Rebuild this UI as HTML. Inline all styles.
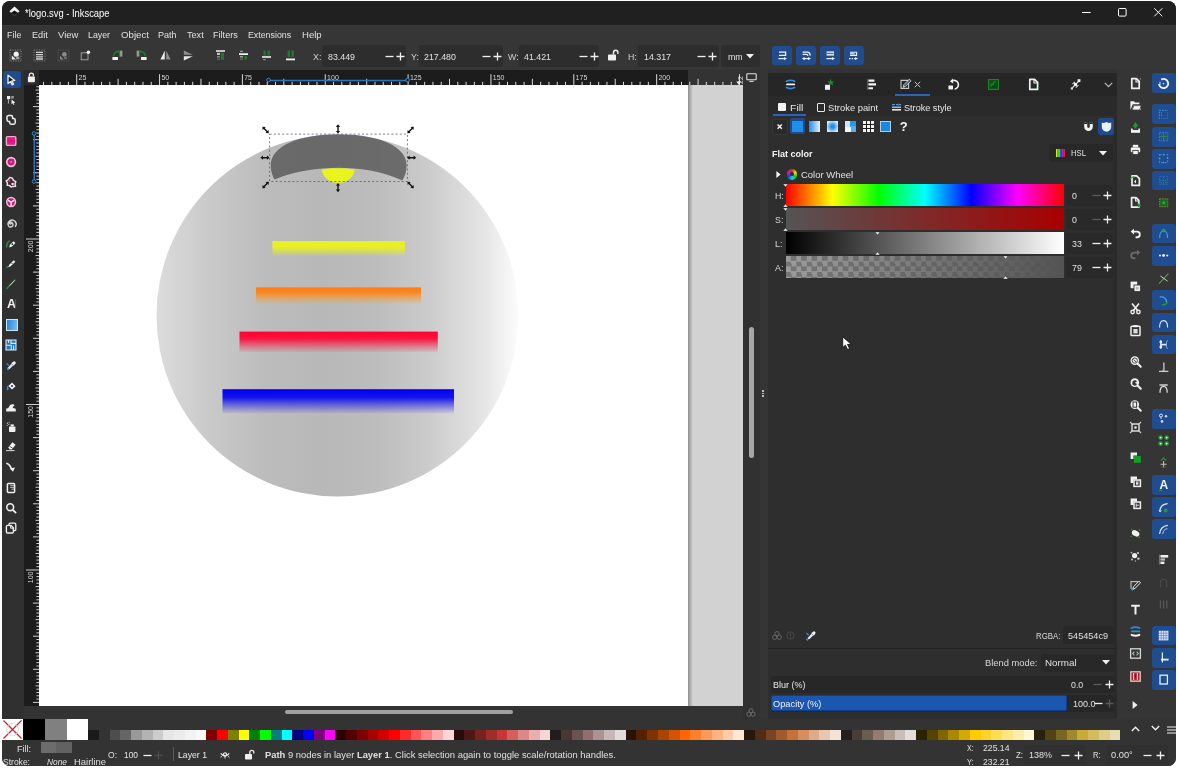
<!DOCTYPE html><html><head><meta charset="utf-8"><title>*logo.svg - Inkscape</title><style>
html,body{margin:0;padding:0;}
body{width:1178px;height:768px;overflow:hidden;background:#fff;font-family:"Liberation Sans",sans-serif;position:relative;}
#win{will-change:transform;position:absolute;left:2px;top:1px;width:1174px;height:764.6px;background:#333333;border-radius:8px;overflow:hidden;}
.abs{position:absolute;}
.t{position:absolute;white-space:nowrap;color:#e4e4e4;font-size:11px;line-height:14px;transform-origin:0 50%;}
.b{font-weight:bold;}
.i{font-style:italic;}
.blue{position:absolute;background:#224c8e;border-radius:3px;}
.box{position:absolute;background:#2d2d2d;border-radius:3px;}
svg{position:absolute;overflow:visible;}
</style></head><body><div id="win">
<div class="abs" style="left:0.00px;top:0.00px;width:1174.00px;height:24.50px;background:#202020;"></div>
<div class="t " style="left:23.00px;top:5.10px;font-size:10.5px;color:#ffffff;transform:scaleX(0.894)">*logo.svg - Inkscape</div>
<svg style="left:6.50px;top:5.00px" width="11" height="10" viewBox="0 0 11 10"><path d="M5.5 0.4L10.6 5.2L9 6.8L5.5 4.4L2 6.8L0.4 5.2Z" fill="#f2f2f2"/><path d="M2.4 7.4L5.5 5.2L8.6 7.4L5.5 9.6Z" fill="#0c0c0c"/><path d="M3 7.6L5.5 9.4L8 7.6" fill="none" stroke="#5a5a5a" stroke-width="0.8"/></svg>
<svg style="left:1079.90px;top:6.70px" width="8.6" height="8.6" viewBox="0 0 8.6 8.6"><path d="M0 4.5H8.6" stroke="#fff" stroke-width="1"/></svg>
<svg style="left:1115.50px;top:6.70px" width="8.6" height="8.6" viewBox="0 0 8.6 8.6"><rect x="0.5" y="0.5" width="7.6" height="7.6" rx="1" fill="none" stroke="#fff" stroke-width="1"/></svg>
<svg style="left:1151.90px;top:6.70px" width="8.6" height="8.6" viewBox="0 0 8.6 8.6"><path d="M0.3 0.3L8.3 8.3M8.3 0.3L0.3 8.3" stroke="#fff" stroke-width="1"/></svg>
<div class="abs" style="left:0.00px;top:23.50px;width:1174.00px;height:1.60px;background:#3a3a3a;"></div>
<div class="abs" style="left:0.00px;top:25.00px;width:1174.00px;height:43.50px;background:#363636;"></div>
<div class="t " style="left:4.80px;top:26.90px;font-size:9.6px;color:#e0e0e0;transform:scaleX(0.931)">File</div>
<div class="t " style="left:29.70px;top:26.90px;font-size:9.6px;color:#e0e0e0;transform:scaleX(0.955)">Edit</div>
<div class="t " style="left:55.70px;top:26.90px;font-size:9.6px;color:#e0e0e0;transform:scaleX(0.984)">View</div>
<div class="t " style="left:86.30px;top:26.90px;font-size:9.6px;color:#e0e0e0;transform:scaleX(0.917)">Layer</div>
<div class="t " style="left:118.50px;top:26.90px;font-size:9.6px;color:#e0e0e0;transform:scaleX(1.010)">Object</div>
<div class="t " style="left:156.00px;top:26.90px;font-size:9.6px;color:#e0e0e0;transform:scaleX(0.942)">Path</div>
<div class="t " style="left:184.70px;top:26.90px;font-size:9.6px;color:#e0e0e0;transform:scaleX(0.948)">Text</div>
<div class="t " style="left:211.20px;top:26.90px;font-size:9.6px;color:#e0e0e0;transform:scaleX(0.949)">Filters</div>
<div class="t " style="left:246.20px;top:26.90px;font-size:9.6px;color:#e0e0e0;transform:scaleX(0.918)">Extensions</div>
<div class="t " style="left:300.20px;top:26.90px;font-size:9.6px;color:#e0e0e0;transform:scaleX(0.998)">Help</div>
<div class="t " style="left:311.40px;top:48.80px;font-size:9.6px;color:#d0d0d0;transform:scaleX(0.920)">X:</div>
<div class="box" style="left:319.80px;top:43.60px;width:84.00px;height:22.20px;background:#2d2d2d"></div>
<div class="t " style="left:325.70px;top:48.80px;font-size:9.6px;color:#e0e0e0;transform:scaleX(0.920)">83.449</div>
<svg style="left:382.80px;top:50.90px" width="9" height="9" viewBox="0 0 9 9"><path d="M0.5 4.5H8.5" stroke="#f0f0f0" stroke-width="1.3"/></svg>
<svg style="left:393.80px;top:50.90px" width="9" height="9" viewBox="0 0 9 9"><path d="M0.5 4.5H8.5M4.5 0.5V8.5" stroke="#f0f0f0" stroke-width="1.3"/></svg>
<div class="t " style="left:409.00px;top:48.80px;font-size:9.6px;color:#d0d0d0;transform:scaleX(0.920)">Y:</div>
<div class="box" style="left:416.50px;top:43.60px;width:84.00px;height:22.20px;background:#2d2d2d"></div>
<div class="t " style="left:422.40px;top:48.80px;font-size:9.6px;color:#e0e0e0;transform:scaleX(0.920)">217.480</div>
<svg style="left:479.50px;top:50.90px" width="9" height="9" viewBox="0 0 9 9"><path d="M0.5 4.5H8.5" stroke="#f0f0f0" stroke-width="1.3"/></svg>
<svg style="left:490.50px;top:50.90px" width="9" height="9" viewBox="0 0 9 9"><path d="M0.5 4.5H8.5M4.5 0.5V8.5" stroke="#f0f0f0" stroke-width="1.3"/></svg>
<div class="t " style="left:505.60px;top:48.80px;font-size:9.6px;color:#d0d0d0;transform:scaleX(0.920)">W:</div>
<div class="box" style="left:517.00px;top:43.60px;width:80.00px;height:22.20px;background:#2d2d2d"></div>
<div class="t " style="left:522.00px;top:48.80px;font-size:9.6px;color:#e0e0e0;transform:scaleX(0.920)">41.421</div>
<svg style="left:576.50px;top:50.90px" width="9" height="9" viewBox="0 0 9 9"><path d="M0.5 4.5H8.5" stroke="#f0f0f0" stroke-width="1.3"/></svg>
<svg style="left:587.50px;top:50.90px" width="9" height="9" viewBox="0 0 9 9"><path d="M0.5 4.5H8.5M4.5 0.5V8.5" stroke="#f0f0f0" stroke-width="1.3"/></svg>
<div class="t " style="left:626.40px;top:48.80px;font-size:9.6px;color:#d0d0d0;transform:scaleX(0.920)">H:</div>
<div class="box" style="left:636.00px;top:43.60px;width:80.70px;height:22.20px;background:#2d2d2d"></div>
<div class="t " style="left:641.60px;top:48.80px;font-size:9.6px;color:#e0e0e0;transform:scaleX(0.920)">14.317</div>
<svg style="left:694.50px;top:50.90px" width="9" height="9" viewBox="0 0 9 9"><path d="M0.5 4.5H8.5" stroke="#f0f0f0" stroke-width="1.3"/></svg>
<svg style="left:705.50px;top:50.90px" width="9" height="9" viewBox="0 0 9 9"><path d="M0.5 4.5H8.5M4.5 0.5V8.5" stroke="#f0f0f0" stroke-width="1.3"/></svg>
<div class="box" style="left:718.60px;top:43.60px;width:39.40px;height:22.20px;background:#2d2d2d"></div>
<div class="t " style="left:725.60px;top:48.80px;font-size:9.6px;color:#e0e0e0;transform:scaleX(0.920)">mm</div>
<svg style="left:744.00px;top:53.00px" width="8" height="5" viewBox="0 0 8 5"><path d="M0 0H8L4 4.5Z" fill="#f0f0f0"/></svg>
<svg style="left:605.00px;top:48.00px" width="12" height="12" viewBox="0 0 12 12"><rect x="1" y="5.5" width="8" height="6" rx="0.8" fill="#f0f0f0"/><path d="M6.5 5.5V3.5a2.2 2.2 0 0 1 4.4 0V5" fill="none" stroke="#f0f0f0" stroke-width="1.4"/></svg>
<div class="blue" style="left:770.30px;top:45.10px;width:20.10px;height:18.50px;background:#224c8e"></div>
<svg style="left:774.80px;top:49.10px" width="11" height="11" viewBox="0 0 11 11"><path d="M2 2.2H8.6V5.4H2" fill="none" stroke="#eef3ff" stroke-width="1.3"/><path d="M1.4 8.6H8" stroke="#eef3ff" stroke-width="1.2"/><path d="M7.2 6.9L9.9 8.6L7.2 10.3Z" fill="#eef3ff"/></svg>
<div class="blue" style="left:794.00px;top:45.10px;width:20.10px;height:18.50px;background:#224c8e"></div>
<svg style="left:798.50px;top:49.10px" width="11" height="11" viewBox="0 0 11 11"><path d="M1.6 2.2H6.4C8.4 2.2 9.2 3.6 9.2 5.4" fill="none" stroke="#eef3ff" stroke-width="1.3"/><path d="M1.6 4.4H5C6.4 4.4 7 5 7 6" fill="none" stroke="#eef3ff" stroke-width="1.1"/><path d="M3 8.6H8" stroke="#eef3ff" stroke-width="1.2"/><path d="M3.6 6.9L0.9 8.6L3.6 10.3ZM7.2 6.9L9.9 8.6L7.2 10.3Z" fill="#eef3ff"/></svg>
<div class="blue" style="left:818.00px;top:45.10px;width:20.10px;height:18.50px;background:#224c8e"></div>
<svg style="left:822.50px;top:49.10px" width="11" height="11" viewBox="0 0 11 11"><path d="M1.6 1.4H9V5.6H1.6Z" fill="#dfe8fb"/><path d="M2 3.4H8.6" stroke="#224c8e" stroke-width="0.9"/><path d="M1.4 8.6H8" stroke="#eef3ff" stroke-width="1.2"/><path d="M7.2 6.9L9.9 8.6L7.2 10.3Z" fill="#eef3ff"/></svg>
<div class="blue" style="left:841.60px;top:45.10px;width:20.10px;height:18.50px;background:#224c8e"></div>
<svg style="left:846.10px;top:49.10px" width="11" height="11" viewBox="0 0 11 11"><path d="M2 2.2H8.6V5.4H2M2 3.8H6.6" fill="none" stroke="#eef3ff" stroke-width="1.1"/><path d="M1 8.6H8" stroke="#eef3ff" stroke-width="1.3" stroke-dasharray="1.6 1"/><path d="M7.2 6.9L9.9 8.6L7.2 10.3Z" fill="#eef3ff"/></svg>
<svg style="left:7.40px;top:48.40px" width="13" height="13" viewBox="0 0 13 13"><rect x="1" y="1" width="11" height="11" fill="none" stroke="#8c8c8c" stroke-width="0.9" stroke-dasharray="1.2 1.2"/><circle cx="7.2" cy="5.2" r="2.6" fill="#f2f2f2"/><path d="M2.8 6.4L7 10.4H2.8Z" fill="#f2f2f2"/><rect x="7" y="7.6" width="3.4" height="2.8" fill="#9a9a9a"/></svg>
<svg style="left:30.50px;top:48.40px" width="13" height="13" viewBox="0 0 13 13"><rect x="1" y="1" width="11" height="11" fill="none" stroke="#808080" stroke-width="0.9" stroke-dasharray="1.2 1.2"/><path d="M3 3.4H10M3 5.6H10M3 7.8H10M3 10H10" stroke="#d4d4d4" stroke-width="1.3"/></svg>
<svg style="left:55.10px;top:48.40px" width="13" height="13" viewBox="0 0 13 13"><rect x="1" y="1" width="11" height="11" fill="none" stroke="#5c5c5c" stroke-width="0.9" stroke-dasharray="1.2 1.2"/><circle cx="7.4" cy="5.4" r="2.4" fill="#8a8a8a"/><path d="M3 6.8L6.6 10.4H3Z" fill="#8a8a8a"/><rect x="7" y="7.8" width="3" height="2.4" fill="#6a6a6a"/></svg>
<svg style="left:77.10px;top:48.40px" width="13" height="13" viewBox="0 0 13 13"><rect x="2.2" y="3.8" width="6.8" height="7" fill="none" stroke="#a8a8a8" stroke-width="0.9"/><circle cx="9.4" cy="3.2" r="1.7" fill="#f4f4f4"/></svg>
<svg style="left:109.40px;top:48.40px" width="13" height="13" viewBox="0 0 13 13"><rect x="1.4" y="8" width="5.6" height="3" fill="#f2f2f2"/><rect x="8.6" y="1.6" width="2.8" height="6" fill="#8f9a8f"/><path d="M2 7.2C2 4 4 2 7 1.8V0.6L9 2.6L7 4.4V3.2C4.6 3.4 3.6 5 3.4 7.2Z" fill="#1f7a2e"/></svg>
<svg style="left:132.50px;top:48.40px" width="13" height="13" viewBox="0 0 13 13"><rect x="6" y="8" width="5.6" height="3" fill="#f2f2f2"/><rect x="1.6" y="1.6" width="2.8" height="6" fill="#8f9a8f"/><path d="M11 7.2C11 4 9 2 6 1.8V0.6L4 2.6L6 4.4V3.2C8.4 3.4 9.4 5 9.6 7.2Z" fill="#1f7a2e"/></svg>
<svg style="left:156.70px;top:48.40px" width="13" height="13" viewBox="0 0 13 13"><path d="M5.8 1.6V10.6H1.4Z" fill="#e8e8e8"/><path d="M7.2 1.6V10.6H11.6Z" fill="#8e8e8e"/></svg>
<svg style="left:179.90px;top:48.40px" width="13" height="13" viewBox="0 0 13 13"><path d="M1.8 5.8H10.8L1.8 1.4Z" fill="#8e8e8e"/><path d="M1.8 7.2H10.8L1.8 11.6Z" fill="#e8e8e8"/></svg>
<svg style="left:211.50px;top:48.40px" width="13" height="13" viewBox="0 0 13 13"><path d="M2 2H11" stroke="#f2f2f2" stroke-width="1.5"/><rect x="3" y="3.8" width="3" height="2.2" fill="#b8c8b8"/><rect x="7" y="3.8" width="3" height="7" fill="#1f7a2e"/><rect x="3" y="7" width="3" height="1.6" fill="#7a8a7a"/><rect x="3" y="9.4" width="3" height="1.4" fill="#5a6a5a"/></svg>
<svg style="left:235.30px;top:48.40px" width="13" height="13" viewBox="0 0 13 13"><path d="M3 2.4H6" stroke="#9a9a9a" stroke-width="1.2"/><path d="M2 5.2H11" stroke="#f2f2f2" stroke-width="1.7"/><rect x="3" y="7" width="3" height="1.5" fill="#9a9a9a"/><rect x="7.4" y="7" width="2.6" height="3.6" fill="#1f7a2e"/><rect x="3" y="9.4" width="3" height="1.4" fill="#6a6a6a"/></svg>
<svg style="left:258.30px;top:48.40px" width="13" height="13" viewBox="0 0 13 13"><rect x="3.4" y="1.6" width="2.4" height="5" fill="#1f7a2e"/><rect x="7.4" y="1.6" width="2.4" height="5" fill="#1f7a2e"/><path d="M2 8H11" stroke="#f2f2f2" stroke-width="1.6"/><path d="M3 10.6H6" stroke="#8a8a8a" stroke-width="1.1"/></svg>
<svg style="left:281.90px;top:48.40px" width="13" height="13" viewBox="0 0 13 13"><rect x="3.6" y="1.4" width="2.4" height="6.6" fill="#1f7a2e"/><rect x="7.4" y="1.4" width="2.4" height="6.6" fill="#1f7a2e"/><path d="M2 10.4H11" stroke="#f2f2f2" stroke-width="1.8"/></svg>
<div class="abs" style="left:0.00px;top:68.50px;width:22.20px;height:650.00px;background:#303030;"></div>
<div class="blue" style="left:1.40px;top:70.30px;width:17.40px;height:17.00px;background:#204c90"></div>
<div class="abs" style="left:21.80px;top:68.80px;width:15.20px;height:15.20px;background:#2b2b2b;"></div>
<div class="abs" style="left:37.00px;top:68.80px;width:649.20px;height:15.20px;background:#1c1c1c;"></div>
<div class="abs" style="left:686.20px;top:68.80px;width:55.00px;height:15.20px;background:#333333;"></div>
<div class="abs" style="left:22.20px;top:84.00px;width:14.80px;height:621.00px;background:#1c1c1c;"></div>
<div class="abs" style="left:21.80px;top:705.00px;width:15.00px;height:12.50px;background:#333333;"></div>
<div class="abs" style="left:37.00px;top:84.00px;width:649.20px;height:621.00px;background:#ffffff;"></div>
<div class="abs" style="left:686.20px;top:84.00px;width:54.80px;height:621.00px;background:#d2d2d2;"></div>
<div class="abs" style="left:686.2px;top:84px;width:5px;height:621px;background:linear-gradient(90deg,rgba(90,90,90,.55),rgba(120,120,120,0))"></div>
<svg style="left:-2px;top:-1px" width="1178" height="768" viewBox="0 0 1178 768">
<defs>
<linearGradient id="gc" x1="0" x2="1" y1="0" y2="0"><stop offset="0" stop-color="#dcdcdc"/><stop offset="0.14" stop-color="#cacaca"/><stop offset="0.3" stop-color="#bcbcbc"/><stop offset="0.46" stop-color="#b8b8b8"/><stop offset="0.6" stop-color="#bcbcbc"/><stop offset="0.75" stop-color="#cbcbcb"/><stop offset="0.9" stop-color="#e4e4e4"/><stop offset="1" stop-color="#fcfcfc"/></linearGradient>
<linearGradient id="gy" x1="0" x2="0" y1="0" y2="1"><stop offset="0" stop-color="#eaf21c"/><stop offset="0.45" stop-color="#e6ee2a"/><stop offset="1" stop-color="#e6ee2a" stop-opacity="0.12"/></linearGradient>
<linearGradient id="go" x1="0" x2="0" y1="0" y2="1"><stop offset="0" stop-color="#ff7a14"/><stop offset="0.3" stop-color="#fb861f"/><stop offset="1" stop-color="#f6a030" stop-opacity="0.1"/></linearGradient>
<linearGradient id="gr" x1="0" x2="0" y1="0" y2="1"><stop offset="0" stop-color="#ff0030"/><stop offset="0.35" stop-color="#fa1540"/><stop offset="1" stop-color="#f03050" stop-opacity="0.08"/></linearGradient>
<linearGradient id="gb" x1="0" x2="0" y1="0" y2="1"><stop offset="0" stop-color="#0000f0"/><stop offset="0.35" stop-color="#1414ee"/><stop offset="1" stop-color="#3030e0" stop-opacity="0.08"/></linearGradient>
</defs>
<circle cx="337.5" cy="315.5" r="181" fill="url(#gc)"/>
<rect x="272.4" y="241" width="132.5" height="14.5" fill="url(#gy)"/>
<rect x="256" y="287.4" width="165" height="16.3" fill="url(#go)"/>
<rect x="239.5" y="331.6" width="198.3" height="20.6" fill="url(#gr)"/>
<rect x="222.5" y="389.2" width="231.5" height="24" fill="url(#gb)"/>
<path d="M321.8 169.5 Q338 167.2 354.7 169.5 A16.5 14.6 0 0 1 321.8 169.5Z" fill="#e9f518"/>
<path d="M274.4 179.6 C272 175 270.6 170 270.8 165 C270.8 146.5 298 134.2 338.5 134.2 C379 134.2 406.6 146.5 406.6 165 C406.8 170 405.4 175.6 402.4 180.6 C382 171 359 167.8 338.5 167.8 C318 167.8 295 171 274.4 179.6Z" fill="#545454" fill-opacity="0.79"/>
<rect x="269.6" y="134.1" width="137.8" height="47.4" fill="none" stroke="#555a78" stroke-width="0.8" stroke-dasharray="2 2.2"/>
<g transform="translate(265.6 130) rotate(45) scale(0.88)"><path d="M-5.2 0L-2.3 -2.4V-0.8H2.3V-2.4L5.2 0L2.3 2.4V0.8H-2.3V2.4Z" fill="#111"/></g>
<g transform="translate(338 128.9) rotate(90) scale(0.88)"><path d="M-5.2 0L-2.3 -2.4V-0.8H2.3V-2.4L5.2 0L2.3 2.4V0.8H-2.3V2.4Z" fill="#111"/></g>
<g transform="translate(410.6 130) rotate(-45) scale(0.88)"><path d="M-5.2 0L-2.3 -2.4V-0.8H2.3V-2.4L5.2 0L2.3 2.4V0.8H-2.3V2.4Z" fill="#111"/></g>
<g transform="translate(265 157.7) rotate(0) scale(0.88)"><path d="M-5.2 0L-2.3 -2.4V-0.8H2.3V-2.4L5.2 0L2.3 2.4V0.8H-2.3V2.4Z" fill="#111"/></g>
<g transform="translate(411.6 157.7) rotate(0) scale(0.88)"><path d="M-5.2 0L-2.3 -2.4V-0.8H2.3V-2.4L5.2 0L2.3 2.4V0.8H-2.3V2.4Z" fill="#111"/></g>
<g transform="translate(265.6 185) rotate(-45) scale(0.88)"><path d="M-5.2 0L-2.3 -2.4V-0.8H2.3V-2.4L5.2 0L2.3 2.4V0.8H-2.3V2.4Z" fill="#111"/></g>
<g transform="translate(338 187.6) rotate(90) scale(0.88)"><path d="M-5.2 0L-2.3 -2.4V-0.8H2.3V-2.4L5.2 0L2.3 2.4V0.8H-2.3V2.4Z" fill="#111"/></g>
<g transform="translate(410.6 185) rotate(45) scale(0.88)"><path d="M-5.2 0L-2.3 -2.4V-0.8H2.3V-2.4L5.2 0L2.3 2.4V0.8H-2.3V2.4Z" fill="#111"/></g>
</svg>
<svg style="left:-2px;top:-1px" width="1178" height="768" viewBox="0 0 1178 768">
<path d="M43.56 81.8V85M51.84 81.8V85M60.13 81.8V85M68.42 81.8V85M76.70 74.2V85M84.98 81.8V85M93.27 81.8V85M101.56 81.8V85M109.84 81.8V85M118.12 78.8V85M126.41 81.8V85M134.69 81.8V85M142.98 81.8V85M151.26 81.8V85M159.55 74.2V85M167.84 81.8V85M176.12 81.8V85M184.41 81.8V85M192.69 81.8V85M200.98 78.8V85M209.26 81.8V85M217.55 81.8V85M225.83 81.8V85M234.12 81.8V85M242.40 74.2V85M250.69 81.8V85M258.97 81.8V85M267.25 81.8V85M275.54 81.8V85M283.82 78.8V85M292.11 81.8V85M300.39 81.8V85M308.68 81.8V85M316.97 81.8V85M325.25 74.2V85M333.53 81.8V85M341.82 81.8V85M350.11 81.8V85M358.39 81.8V85M366.68 78.8V85M374.96 81.8V85M383.25 81.8V85M391.53 81.8V85M399.81 81.8V85M408.10 74.2V85M416.38 81.8V85M424.67 81.8V85M432.95 81.8V85M441.24 81.8V85M449.52 78.8V85M457.81 81.8V85M466.09 81.8V85M474.38 81.8V85M482.67 81.8V85M490.95 74.2V85M499.24 81.8V85M507.52 81.8V85M515.81 81.8V85M524.09 81.8V85M532.38 78.8V85M540.66 81.8V85M548.95 81.8V85M557.23 81.8V85M565.51 81.8V85M573.80 74.2V85M582.09 81.8V85M590.37 81.8V85M598.66 81.8V85M606.94 81.8V85M615.23 78.8V85M623.51 81.8V85M631.80 81.8V85M640.08 81.8V85M648.37 81.8V85M656.65 74.2V85M664.94 81.8V85M673.22 81.8V85M681.51 81.8V85M689.79 81.8V85M698.08 78.8V85M706.36 81.8V85M714.65 81.8V85M722.93 81.8V85M731.22 81.8V85M739.50 74.2V85" stroke="#d8d8d8" stroke-width="1" fill="none"/>
<path d="M36.4 86.74H39M35.6 90.05H39M36.4 93.36H39M36.4 96.67H39M36.4 99.98H39M36.4 103.29H39M33 106.60H39M36.4 109.91H39M36.4 113.22H39M36.4 116.53H39M36.4 119.84H39M35.6 123.15H39M36.4 126.46H39M36.4 129.77H39M36.4 133.08H39M36.4 136.39H39M33 139.70H39M36.4 143.01H39M36.4 146.32H39M36.4 149.63H39M36.4 152.94H39M35.6 156.25H39M36.4 159.56H39M36.4 162.87H39M36.4 166.18H39M36.4 169.49H39M33 172.80H39M36.4 176.11H39M36.4 179.42H39M36.4 182.73H39M36.4 186.04H39M35.6 189.35H39M36.4 192.66H39M36.4 195.97H39M36.4 199.28H39M36.4 202.59H39M33 205.90H39M36.4 209.21H39M36.4 212.52H39M36.4 215.83H39M36.4 219.14H39M35.6 222.45H39M36.4 225.76H39M36.4 229.07H39M36.4 232.38H39M36.4 235.69H39M26 239.00H39M36.4 242.31H39M36.4 245.62H39M36.4 248.93H39M36.4 252.24H39M35.6 255.55H39M36.4 258.86H39M36.4 262.17H39M36.4 265.48H39M36.4 268.79H39M33 272.10H39M36.4 275.41H39M36.4 278.72H39M36.4 282.03H39M36.4 285.34H39M35.6 288.65H39M36.4 291.96H39M36.4 295.27H39M36.4 298.58H39M36.4 301.89H39M33 305.20H39M36.4 308.51H39M36.4 311.82H39M36.4 315.13H39M36.4 318.44H39M35.6 321.75H39M36.4 325.06H39M36.4 328.37H39M36.4 331.68H39M36.4 334.99H39M33 338.30H39M36.4 341.61H39M36.4 344.92H39M36.4 348.23H39M36.4 351.54H39M35.6 354.85H39M36.4 358.16H39M36.4 361.47H39M36.4 364.78H39M36.4 368.09H39M33 371.40H39M36.4 374.71H39M36.4 378.02H39M36.4 381.33H39M36.4 384.64H39M35.6 387.95H39M36.4 391.26H39M36.4 394.57H39M36.4 397.88H39M36.4 401.19H39M26 404.50H39M36.4 407.81H39M36.4 411.12H39M36.4 414.43H39M36.4 417.74H39M35.6 421.05H39M36.4 424.36H39M36.4 427.67H39M36.4 430.98H39M36.4 434.29H39M33 437.60H39M36.4 440.91H39M36.4 444.22H39M36.4 447.53H39M36.4 450.84H39M35.6 454.15H39M36.4 457.46H39M36.4 460.77H39M36.4 464.08H39M36.4 467.39H39M33 470.70H39M36.4 474.01H39M36.4 477.32H39M36.4 480.63H39M36.4 483.94H39M35.6 487.25H39M36.4 490.56H39M36.4 493.87H39M36.4 497.18H39M36.4 500.49H39M33 503.80H39M36.4 507.11H39M36.4 510.42H39M36.4 513.73H39M36.4 517.04H39M35.6 520.35H39M36.4 523.66H39M36.4 526.97H39M36.4 530.28H39M36.4 533.59H39M33 536.90H39M36.4 540.21H39M36.4 543.52H39M36.4 546.83H39M36.4 550.14H39M35.6 553.45H39M36.4 556.76H39M36.4 560.07H39M36.4 563.38H39M36.4 566.69H39M26 570.00H39M36.4 573.31H39M36.4 576.62H39M36.4 579.93H39M36.4 583.24H39M35.6 586.55H39M36.4 589.86H39M36.4 593.17H39M36.4 596.48H39M36.4 599.79H39M33 603.10H39M36.4 606.41H39M36.4 609.72H39M36.4 613.03H39M36.4 616.34H39M35.6 619.65H39M36.4 622.96H39M36.4 626.27H39M36.4 629.58H39M36.4 632.89H39M33 636.20H39M36.4 639.51H39M36.4 642.82H39M36.4 646.13H39M36.4 649.44H39M35.6 652.75H39M36.4 656.06H39M36.4 659.37H39M36.4 662.68H39M36.4 665.99H39M33 669.30H39M36.4 672.61H39M36.4 675.92H39M36.4 679.23H39M36.4 682.54H39M35.6 685.85H39M36.4 689.16H39M36.4 692.47H39M36.4 695.78H39M36.4 699.09H39M33 702.40H39" stroke="#d0d0d0" stroke-width="1" fill="none"/>
<path d="M268.5 80.5H407.5" stroke="#2a76b8" stroke-width="1.4"/><circle cx="268.5" cy="80" r="1.8" fill="#1c1c1c" stroke="#3a8ad4" stroke-width="1"/><circle cx="407.5" cy="80" r="1.8" fill="#1c1c1c" stroke="#3a8ad4" stroke-width="1"/>
<path d="M34.3 133.5V181.5" stroke="#2a76b8" stroke-width="1.4"/><circle cx="34" cy="133.5" r="1.8" fill="#1c1c1c" stroke="#3a8ad4" stroke-width="1"/><circle cx="34" cy="181.5" r="1.8" fill="#1c1c1c" stroke="#3a8ad4" stroke-width="1"/>
<path d="M736.3 81.5H741.3L738.8 85Z" fill="#f0f0f0"/>
<text x="78.5" y="80.3" font-size="7" fill="#d6d6d6" font-family="Liberation Sans, sans-serif">25</text>
<text x="161.4" y="80.3" font-size="7" fill="#d6d6d6" font-family="Liberation Sans, sans-serif">50</text>
<text x="244.2" y="80.3" font-size="7" fill="#d6d6d6" font-family="Liberation Sans, sans-serif">75</text>
<text x="327.1" y="80.3" font-size="7" fill="#d6d6d6" font-family="Liberation Sans, sans-serif">100</text>
<text x="409.9" y="80.3" font-size="7" fill="#d6d6d6" font-family="Liberation Sans, sans-serif">125</text>
<text x="492.8" y="80.3" font-size="7" fill="#d6d6d6" font-family="Liberation Sans, sans-serif">150</text>
<text x="575.6" y="80.3" font-size="7" fill="#d6d6d6" font-family="Liberation Sans, sans-serif">175</text>
<text x="658.4" y="80.3" font-size="7" fill="#d6d6d6" font-family="Liberation Sans, sans-serif">200</text>
<text x="0" y="0" transform="translate(742.5 84) rotate(-90)" font-size="7" fill="#d6d6d6" font-family="Liberation Sans, sans-serif">22</text>
<text x="0" y="0" transform="translate(33.3 252.2) rotate(-90)" font-size="7" fill="#d6d6d6" font-family="Liberation Sans, sans-serif">200</text>
<text x="0" y="0" transform="translate(33.3 417.7) rotate(-90)" font-size="7" fill="#d6d6d6" font-family="Liberation Sans, sans-serif">150</text>
<text x="0" y="0" transform="translate(33.3 583.2) rotate(-90)" font-size="7" fill="#d6d6d6" font-family="Liberation Sans, sans-serif">100</text>
<rect x="27.9" y="76.6" width="7" height="5.6" rx="0.8" fill="#f0f0f0"/><path d="M29.4 76.6V75.2a2 2 0 0 1 4 0V76.6" fill="none" stroke="#f0f0f0" stroke-width="1.3"/>
</svg>
<svg style="left:3.40px;top:72.50px" width="12" height="12" viewBox="0 0 12 12"><path d="M3 1.2L9.8 6.4L6.9 6.9L8.6 10.2L7.2 10.9L5.6 7.6L3 9.6Z" fill="#1a1a1a" stroke="#f0f0f0" stroke-width="1.3" stroke-linejoin="round"/></svg>
<svg style="left:3.40px;top:93.00px" width="12" height="12" viewBox="0 0 12 12"><rect x="2" y="2" width="3.2" height="3.2" fill="#f0f0f0"/><rect x="6.2" y="2" width="2.6" height="2.6" fill="#9a9a9a"/><path d="M3.4 5.2V9.5" stroke="#bbb" stroke-width="1"/><path d="M6.5 5.6L10.3 8.6L8.6 8.9L9.4 10.6L8.5 11L7.7 9.3L6.5 10.3Z" fill="#f0f0f0"/></svg>
<svg style="left:3.40px;top:113.40px" width="12" height="12" viewBox="0 0 12 12"><path d="M2 3.2a1.6 1.6 0 0 1 1.6-1.6H6a1.6 1.6 0 0 1 1.6 1.6V4.4H8.6a1.6 1.6 0 0 1 1.6 1.6V8.6a1.6 1.6 0 0 1-1.6 1.6H6.2a1.6 1.6 0 0 1-1.6-1.6V7.4H3.6A1.6 1.6 0 0 1 2 5.8Z" fill="none" stroke="#f0f0f0" stroke-width="1.5" stroke-linejoin="round"/></svg>
<svg style="left:3.40px;top:134.40px" width="12" height="12" viewBox="0 0 12 12"><rect x="1.4" y="1.6" width="9.4" height="8.8" rx="1" fill="#e8188a" stroke="#f6a8cc" stroke-width="1.4"/><path d="M2.4 6H9.8" stroke="#c01272" stroke-width="0.8"/></svg>
<svg style="left:3.40px;top:154.60px" width="12" height="12" viewBox="0 0 12 12"><circle cx="6.1" cy="6" r="4.3" fill="#cc1880" stroke="#f4bcd8" stroke-width="1.7"/><circle cx="6.1" cy="6" r="1.1" fill="#f07ab4"/></svg>
<svg style="left:3.40px;top:175.00px" width="12" height="12" viewBox="0 0 12 12"><path d="M4.8 1.4L7.4 2.2L8.4 4.4L10.8 5.6L10 8L10.6 10.2L8 10.4L6.2 11L4.6 9.6L2.2 9.2L2.4 6.8L1.2 4.8L3.2 3.6Z" fill="#3a2a32" stroke="#f4dce8" stroke-width="1.5" stroke-linejoin="round"/><circle cx="7.6" cy="8" r="1.3" fill="#f4dce8"/><circle cx="4.6" cy="5" r="1" fill="#ec2a8b"/></svg>
<svg style="left:3.40px;top:195.20px" width="12" height="12" viewBox="0 0 12 12"><circle cx="6.1" cy="6" r="4.4" fill="#c8187a" stroke="#f4bcd8" stroke-width="1.5"/><path d="M6.1 6.4V10M6.1 6.4L3 4.2M6.1 6.4L9.2 4.2" stroke="#fbe6f0" stroke-width="1.5" fill="none"/></svg>
<svg style="left:3.40px;top:215.50px" width="12" height="12" viewBox="0 0 12 12"><path d="M6.2 6.4a0.9 0.9 0 1 1 -0.9-1.2a2.4 2.4 0 1 1 -1.8 3.6a4 4 0 1 1 6.9 0.6" fill="none" stroke="#d8d8d8" stroke-width="1.4" stroke-linecap="round"/></svg>
<svg style="left:3.40px;top:236.50px" width="12" height="12" viewBox="0 0 12 12"><path d="M1.5 9.5C2 5 3.5 3 5 3" stroke="#2e8b3a" stroke-width="1.6" fill="none"/><path d="M4.2 9.6L5 6.4L8.6 3.2L10.4 5L7 8.6Z" fill="#f0f0f0"/><circle cx="7.3" cy="6.2" r="0.9" fill="#303030"/></svg>
<svg style="left:3.40px;top:256.50px" width="12" height="12" viewBox="0 0 12 12"><path d="M1.5 10C2.2 8.6 3 8.3 4 8.6" stroke="#2e8b3a" stroke-width="1.4" fill="none"/><path d="M3.4 9.2L4.2 6.8L8.8 2.2L10.3 3.7L5.7 8.3Z" fill="#f0f0f0"/><path d="M6.3 4.7L7.8 6.2" stroke="#303030" stroke-width="0.9"/></svg>
<svg style="left:3.40px;top:276.50px" width="12" height="12" viewBox="0 0 12 12"><path d="M2 10.2L10 2" stroke="#2e8b3a" stroke-width="1.5" stroke-linecap="round"/><path d="M4.6 7.6L9.6 2.4" stroke="#cfe6cf" stroke-width="0.8"/></svg>
<div class="t b" style="left:5.00px;top:295.80px;font-size:12.5px;color:#f4f4f4;">A</div>
<svg style="left:3.40px;top:297.00px" width="12" height="12" viewBox="0 0 12 12"><path d="M10.5 1.5V10.5" stroke="#3c6a44" stroke-width="1.2"/></svg>
<div class="abs" style="left:4.20px;top:318.30px;width:9.4px;height:9.4px;border:1px solid #cfe4f7;background:linear-gradient(100deg,#1f86de,#7fbdf0);"></div>
<svg style="left:3.40px;top:338.00px" width="12" height="12" viewBox="0 0 12 12"><rect x="1" y="1" width="10" height="10" fill="#1f78c8" stroke="#cfe4f7" stroke-width="1.1"/><path d="M1 6.3H6.3V11M6 1V4.4H11M3.6 1V4M8.6 6.4V11" stroke="#d8ecfb" stroke-width="1.1" fill="none"/></svg>
<svg style="left:3.40px;top:358.50px" width="12" height="12" viewBox="0 0 12 12"><path d="M2.2 9.8L3 7.4L6.6 3.8L8.2 5.4L4.6 9Z" fill="#d9e9f7"/><path d="M6.2 3.2L8.6 1.4a1.5 1.5 0 0 1 2 2L8.8 5.8Z" fill="#f0f0f0"/><path d="M1.6 3.4L4 5.6" stroke="#2f8fe0" stroke-width="1.3"/><path d="M2.4 8.4L3.8 9.6" stroke="#2f8fe0" stroke-width="1.4"/></svg>
<svg style="left:3.40px;top:379.00px" width="12" height="12" viewBox="0 0 12 12"><path d="M3.4 6L7 2.6L10.6 6.2L7 9.6Z" fill="#f0f0f0"/><circle cx="7" cy="6" r="1" fill="#303030"/><path d="M2.8 6.8C1.2 8.2 1.4 10.2 2.6 10.4C3.8 10.2 4 8.4 2.8 6.8Z" fill="#2f8fe0"/><path d="M3.6 5.6L1.8 7.6" stroke="#2f8fe0" stroke-width="1.2"/></svg>
<svg style="left:3.40px;top:399.50px" width="12" height="12" viewBox="0 0 12 12"><path d="M1.2 10.4V7.6C2.6 7.4 3.6 6.8 4.2 5.4C5 3.4 7 2.6 8.8 3.6C9.6 4.2 9.6 5 8.8 5.2C7.6 5.4 7.4 6.4 8.4 7C9.4 7.4 10.8 7.4 10.8 8.2V10.4Z" fill="#f0f0f0"/></svg>
<svg style="left:3.40px;top:420.00px" width="12" height="12" viewBox="0 0 12 12"><rect x="4" y="5.4" width="6.4" height="5.6" rx="0.8" fill="#f0f0f0"/><rect x="5.6" y="3.4" width="3.2" height="2" fill="#f0f0f0"/><circle cx="2.4" cy="2.2" r="0.7" fill="#bbb"/><circle cx="4.2" cy="1.6" r="0.6" fill="#bbb"/><circle cx="2.2" cy="4.4" r="0.6" fill="#bbb"/><circle cx="3.8" cy="3.4" r="0.6" fill="#bbb"/></svg>
<svg style="left:3.40px;top:439.00px" width="12" height="12" viewBox="0 0 12 12"><path d="M3.2 7.6L7.4 2.2L10.6 4.8L6.8 9.6H4.8Z" fill="#f0f0f0"/><path d="M1 10.6H9.6" stroke="#cfcfcf" stroke-width="1.1"/><path d="M4.4 6L7.8 8.4" stroke="#303030" stroke-width="0.8"/></svg>
<svg style="left:3.40px;top:459.50px" width="12" height="12" viewBox="0 0 12 12"><path d="M2 2.4C4.6 3.2 5.6 5.4 6.6 8" stroke="#f0f0f0" stroke-width="1.6" fill="none" stroke-linecap="round"/><path d="M4.8 7.6L10 6.4L8 10.8Z" fill="#f0f0f0"/></svg>
<svg style="left:3.40px;top:480.50px" width="12" height="12" viewBox="0 0 12 12"><rect x="2.4" y="1.6" width="7.2" height="9" rx="1" fill="none" stroke="#f0f0f0" stroke-width="1.5"/><path d="M5.2 3.6H9M5.2 5.4H9M6.4 7.2H9" stroke="#ddd" stroke-width="0.8"/></svg>
<svg style="left:3.40px;top:501.00px" width="12" height="12" viewBox="0 0 12 12"><circle cx="5.2" cy="5.2" r="3.4" fill="none" stroke="#f0f0f0" stroke-width="1.6"/><path d="M7.8 7.8L10.6 10.6" stroke="#f0f0f0" stroke-width="1.8" stroke-linecap="round"/></svg>
<svg style="left:3.40px;top:521.00px" width="12" height="12" viewBox="0 0 12 12"><path d="M4 3V2.2a1 1 0 0 1 1-1H9.6a1.2 1.2 0 0 1 1.2 1.2V7.6a1 1 0 0 1-1 1H9" fill="none" stroke="#f0f0f0" stroke-width="1.3"/><path d="M1.4 4.6a1.2 1.2 0 0 1 1.2-1.2H6L8.4 5.8V9.8a1.2 1.2 0 0 1-1.2 1.2H2.6a1.2 1.2 0 0 1-1.2-1.2Z" fill="none" stroke="#f0f0f0" stroke-width="1.4"/><path d="M5.6 3.6V6.2H8.2" fill="none" stroke="#f0f0f0" stroke-width="1"/></svg>
<!--TOOLBARICONS-->
<div class="abs" style="left:765.60px;top:68.00px;width:349.60px;height:650.00px;background:#2e2e2e;"></div>
<div class="abs" style="left:765.60px;top:68.00px;width:352.00px;height:4.00px;background:#333333;"></div>
<div class="abs" style="left:765.60px;top:72.00px;width:352.00px;height:23.00px;background:#262626;"></div>
<div class="abs" style="left:765.60px;top:95.00px;width:348.60px;height:19.50px;background:#2a2a2a;"></div>
<div class="abs" style="left:1112.00px;top:95.00px;width:3.20px;height:622.00px;background:#2a2a2a;"></div>
<div class="abs" style="left:893.00px;top:93.00px;width:35.00px;height:2.20px;background:#2c62b8;"></div>
<svg style="left:782.00px;top:76.80px" width="13" height="13" viewBox="0 0 13 13"><path d="M2.4 3.2C5 2 8 2 10.6 3.2" stroke="#2f8fe0" stroke-width="1.7" fill="none" stroke-linecap="round"/><path d="M3 6.4H10.2" stroke="#e8f2fb" stroke-width="1.9" stroke-linecap="round"/><path d="M2.4 9.6C5 10.9 8 10.9 10.6 9.6" stroke="#2f8fe0" stroke-width="1.7" fill="none" stroke-linecap="round"/></svg>
<svg style="left:821.10px;top:76.80px" width="13" height="13" viewBox="0 0 13 13"><path d="M7.6 0.8L8.6 3.4L11.4 3.2L9.4 5L10.4 7.6L8 6.2L5.8 7.8L6.4 5.2L4.2 3.6L6.8 3.4Z" fill="#1f8a2f"/><rect x="2" y="6.8" width="5" height="5" fill="#f2f2f2"/></svg>
<svg style="left:862.50px;top:76.80px" width="13" height="13" viewBox="0 0 13 13"><path d="M3.4 2.6H9.4M3.4 6.4H11M3.4 10.2H8" stroke="#f2f2f2" stroke-width="2.1"/><path d="M2.4 1V12" stroke="#3a7a44" stroke-width="0.9"/></svg>
<svg style="left:896.80px;top:76.80px" width="13" height="13" viewBox="0 0 13 13"><path d="M2 2.4H9.6V10.4H2Z" fill="none" stroke="#c9c9c9" stroke-width="1.1"/><path d="M4.2 9.2L5 6.6L10.4 1.2L12 2.8L6.6 8.2Z" fill="#2d2d2d" stroke="#e8e8e8" stroke-width="0.9"/><path d="M5.2 8.2L10.8 2.4" stroke="#2f8fe0" stroke-width="1"/></svg>
<svg style="left:911.80px;top:79.80px" width="7" height="7" viewBox="0 0 7 7"><path d="M0.8 0.8L6.2 6.2M6.2 0.8L0.8 6.2" stroke="#c8c8c8" stroke-width="1"/></svg>
<svg style="left:945.00px;top:76.80px" width="13" height="13" viewBox="0 0 13 13"><path d="M4.4 3.4A4.3 4.3 0 1 1 7.6 11" fill="none" stroke="#f2f2f2" stroke-width="1.6"/><path d="M5.8 0.6L3 3.4L6.2 5.4Z" fill="#f2f2f2"/><rect x="1.4" y="7.4" width="4.6" height="4" rx="0.6" fill="#f2f2f2"/></svg>
<svg style="left:985.10px;top:76.80px" width="13" height="13" viewBox="0 0 13 13"><rect x="1.6" y="1.6" width="9.8" height="9.8" fill="#0f4816" stroke="#178a24" stroke-width="1.1"/><path d="M4 9V6.4H6.4V4H9" fill="none" stroke="#178a24" stroke-width="1.1"/></svg>
<svg style="left:1024.80px;top:76.80px" width="13" height="13" viewBox="0 0 13 13"><path d="M2.8 1.4H7.6L10.6 4.4V11.4H2.8Z" fill="none" stroke="#f2f2f2" stroke-width="1.7" stroke-linejoin="round"/><path d="M7 1.6V5H10.4" fill="none" stroke="#f2f2f2" stroke-width="1.2"/><path d="M11.6 9L11.6 11.6" stroke="#3a8a44" stroke-width="0.9"/></svg>
<svg style="left:1066.50px;top:76.80px" width="13" height="13" viewBox="0 0 13 13"><path d="M2.2 11L10.8 2.2" stroke="#d8d8d8" stroke-width="1.2"/><rect x="8.6" y="1.2" width="2.8" height="2.8" fill="#f2f2f2"/><rect x="5" y="5" width="3" height="3" fill="#f2f2f2"/><path d="M3.4 6.2L6 3.8M6.8 9.6L9.4 7.2" stroke="#d8d8d8" stroke-width="1.1"/><rect x="1.8" y="9.4" width="2.2" height="2.2" fill="#d0d0d0"/></svg>
<svg style="left:1102.30px;top:80.60px" width="9" height="6" viewBox="0 0 9 6"><path d="M0.8 0.8L4.5 4.6L8.2 0.8" stroke="#bdbdbd" stroke-width="1.2" fill="none"/></svg>
<div class="abs" style="left:775.80px;top:101.60px;width:7.80px;height:8.60px;background:#f2f2f2;border-radius:1px;"></div>
<div class="t " style="left:787.70px;top:100.00px;font-size:9.6px;color:#e6e6e6;transform:scaleX(1.092)">Fill</div>
<div class="abs" style="left:770.70px;top:113.00px;width:33.00px;height:1.80px;background:#2c62b8;"></div>
<div class="abs" style="left:814.9px;top:102px;width:6.4px;height:6.8px;border:1.2px solid #e8e8e8;border-radius:1px;"></div>
<div class="t " style="left:826.00px;top:100.00px;font-size:9.6px;color:#e6e6e6;transform:scaleX(0.977)">Stroke paint</div>
<svg style="left:890.10px;top:102.40px" width="9" height="8" viewBox="0 0 9 8"><path d="M0 1.6H3M4 1.6H6M7 1.6H9" stroke="#4a9be0" stroke-width="1.2"/><path d="M0 4.2H9" stroke="#e8e8e8" stroke-width="1.1"/><path d="M0 6.8H9" stroke="#e8e8e8" stroke-width="1.6"/><path d="M6.4 0L7.6 1.6L6.4 3.2" fill="#4a9be0"/></svg>
<div class="t " style="left:902.30px;top:100.00px;font-size:9.6px;color:#e6e6e6;transform:scaleX(0.950)">Stroke style</div>
<div class="abs" style="left:770px;top:117.8px;width:14px;height:14px;border:1px solid #363636;border-radius:2px;background:#2b2b2b"></div>
<svg style="left:774.80px;top:122.60px" width="5.4" height="5.4" viewBox="0 0 5.4 5.4"><path d="M0.6 0.6L4.8 4.8M4.8 0.6L0.6 4.8" stroke="#f4f4f4" stroke-width="1.4"/></svg>
<div class="abs" style="left:787.6px;top:117.4px;width:15.6px;height:15.6px;background:#1f4a8c;border-radius:2px;"></div>
<div class="abs" style="left:790.00px;top:120.00px;width:10.80px;height:10.60px;background:#1e90ea;"></div>
<div class="abs" style="left:807px;top:120px;width:10.8px;height:10.6px;background:linear-gradient(90deg,#1e8ee8,#e8f3fc)"></div>
<div class="abs" style="left:825.4px;top:120px;width:10.8px;height:10.6px;background:radial-gradient(circle,#1e8ee8 20%,#dcedfa 80%)"></div>
<div class="abs" style="left:842.8px;top:120px;width:10.8px;height:10.6px;background:conic-gradient(#2a96e8 0 25%,#5aaeee 25% 50%,#f0f7fd 50% 75%,#cfe6fa 75% 100%)"></div>
<svg style="left:860.50px;top:119.80px" width="11" height="11" viewBox="0 0 11 11"><rect width="11" height="11" fill="#1a1a1a"/><path d="M0 0H3V3H0ZM4 0H7V3H4ZM8 0H11V3H8ZM0 4H3V7H0ZM8 4H11V7H8ZM0 8H3V11H0ZM4 8H7V11H4ZM8 8H11V11H8Z" fill="#f2f2f2"/><rect x="4" y="4" width="3" height="3" fill="#f2f2f2"/></svg>
<div class="abs" style="left:878.2px;top:120px;width:9px;height:8.8px;background:#1e86dc;border:0.9px solid #a8d0f4;"></div>
<div class="t b" style="left:897.80px;top:119.00px;font-size:13px;color:#f8f8f8;transform:scaleX(1.000)">?</div>
<svg style="left:1081.30px;top:119.80px" width="11" height="11" viewBox="0 0 11 11"><path d="M1.2 1.4H4.2V5.6a1.3 1.3 0 0 0 2.6 0V1.4H9.8V5.8a4.3 4.3 0 0 1-8.6 0Z" fill="#f2f2f2"/><path d="M1.2 1.4H4.2V3H1.2ZM6.8 1.4H9.8V3H6.8Z" fill="#1a1a1a"/></svg>
<div class="abs" style="left:1096.4px;top:117px;width:16px;height:16.6px;background:#1f4a8c;border-radius:3px;"></div>
<svg style="left:1099.00px;top:119.80px" width="11" height="11" viewBox="0 0 11 11"><path d="M0.8 1.6C2.2 2.2 3.6 2 5.5 1C7.4 2 8.8 2.2 10.2 1.6V6a4.7 4.7 0 0 1-9.4 0Z" fill="#e8f0fb"/></svg>
<div class="t b" style="left:770.20px;top:145.70px;font-size:9.6px;color:#f4f4f4;transform:scaleX(0.938)">Flat color</div>
<div class="box" style="left:1047.00px;top:142.50px;width:64.00px;height:18.60px;background:#282828"></div>
<svg style="left:1053.50px;top:147.70px" width="9" height="8" viewBox="0 0 9 8"><rect x="0" y="0" width="1.5" height="8" fill="#e8e800"/><rect x="1.5" y="0" width="1.5" height="8" fill="#30d030"/><rect x="3" y="0" width="1.5" height="8" fill="#20c8d8"/><rect x="4.5" y="0" width="1.5" height="8" fill="#2040e8"/><rect x="6" y="0" width="1.5" height="8" fill="#c020d0"/><rect x="7.5" y="0" width="1.5" height="8" fill="#e82020"/></svg>
<div class="t " style="left:1069.00px;top:145.30px;font-size:9.6px;color:#e0e0e0;transform:scaleX(0.803)">HSL</div>
<svg style="left:1096.70px;top:149.50px" width="8" height="5" viewBox="0 0 8 5"><path d="M0 0H8L4 4.5Z" fill="#f0f0f0"/></svg>
<svg style="left:774.30px;top:169.70px" width="5" height="7" viewBox="0 0 5 7"><path d="M0.4 0L4.6 3.5L0.4 7Z" fill="#f4f4f4"/></svg>
<div class="abs" style="left:784.6px;top:167.8px;width:10.8px;height:10.8px;border-radius:50%;background:conic-gradient(#e02020,#e8e020,#20c020,#20c8d8,#2040e0,#c020c8,#e02020);"></div>
<div class="abs" style="left:787.8px;top:171px;width:4.4px;height:4.4px;border-radius:50%;background:#2d2d2d;"></div>
<div class="t " style="left:798.70px;top:166.60px;font-size:9.6px;color:#e0e0e0;transform:scaleX(0.985)">Color Wheel</div>
<div class="abs" style="left:783.5px;top:183.2px;width:278.5px;height:22px;background:linear-gradient(90deg,#f00 0%,#ff0 16.67%,#0f0 33.33%,#0ff 50%,#00f 66.67%,#f0f 83.33%,#f00 100%)"></div>
<div class="abs" style="left:783.5px;top:207.2px;width:278.5px;height:22px;background:linear-gradient(90deg,#545454,#a80000)"></div>
<div class="abs" style="left:783.5px;top:231.2px;width:278.5px;height:22px;background:linear-gradient(90deg,#000,#fff)"></div>
<div class="abs" style="left:783.5px;top:255.2px;width:278.5px;height:22px;background:linear-gradient(90deg,rgba(84,84,84,0),rgba(84,84,84,1)),repeating-conic-gradient(#767676 0 25%,#9c9c9c 0 50%) 0 0/10.4px 10.4px;"></div>
<div class="t " style="left:772.60px;top:187.60px;font-size:9.6px;color:#d8d8d8;transform:scaleX(0.920)">H:</div>
<div class="t " style="left:772.60px;top:211.60px;font-size:9.6px;color:#d8d8d8;transform:scaleX(0.920)">S:</div>
<div class="t " style="left:772.60px;top:235.60px;font-size:9.6px;color:#d8d8d8;transform:scaleX(0.920)">L:</div>
<div class="t " style="left:772.60px;top:259.60px;font-size:9.6px;color:#d8d8d8;transform:scaleX(0.920)">A:</div>
<svg style="left:781.00px;top:182.90px" width="5" height="3" viewBox="0 0 5 3"><path d="M0 0H5L2.5 3Z" fill="#f4f4f4" stroke="#222" stroke-width="0.4"/></svg>
<svg style="left:781.00px;top:202.50px" width="5" height="3" viewBox="0 0 5 3"><path d="M0 3H5L2.5 0Z" fill="#f4f4f4" stroke="#222" stroke-width="0.4"/></svg>
<svg style="left:781.00px;top:206.90px" width="5" height="3" viewBox="0 0 5 3"><path d="M0 0H5L2.5 3Z" fill="#f4f4f4" stroke="#222" stroke-width="0.4"/></svg>
<svg style="left:781.00px;top:226.50px" width="5" height="3" viewBox="0 0 5 3"><path d="M0 3H5L2.5 0Z" fill="#f4f4f4" stroke="#222" stroke-width="0.4"/></svg>
<svg style="left:872.90px;top:230.90px" width="5" height="3" viewBox="0 0 5 3"><path d="M0 0H5L2.5 3Z" fill="#f4f4f4" stroke="#222" stroke-width="0.4"/></svg>
<svg style="left:872.90px;top:250.50px" width="5" height="3" viewBox="0 0 5 3"><path d="M0 3H5L2.5 0Z" fill="#f4f4f4" stroke="#222" stroke-width="0.4"/></svg>
<svg style="left:1001.01px;top:254.90px" width="5" height="3" viewBox="0 0 5 3"><path d="M0 0H5L2.5 3Z" fill="#f4f4f4" stroke="#222" stroke-width="0.4"/></svg>
<svg style="left:1001.01px;top:274.50px" width="5" height="3" viewBox="0 0 5 3"><path d="M0 3H5L2.5 0Z" fill="#f4f4f4" stroke="#222" stroke-width="0.4"/></svg>
<div class="box" style="left:1064.00px;top:183.70px;width:46.80px;height:21.00px;background:#292929"></div>
<div class="t " style="left:1070.40px;top:187.60px;font-size:9.6px;color:#e0e0e0;transform:scaleX(0.920)">0</div>
<svg style="left:1090.10px;top:189.70px" width="9" height="9" viewBox="0 0 9 9"><path d="M0.5 4.5H8.5" stroke="#5a5a5a" stroke-width="1.3"/></svg>
<svg style="left:1100.80px;top:189.70px" width="9" height="9" viewBox="0 0 9 9"><path d="M0.5 4.5H8.5M4.5 0.5V8.5" stroke="#f0f0f0" stroke-width="1.3"/></svg>
<div class="box" style="left:1064.00px;top:207.70px;width:46.80px;height:21.00px;background:#292929"></div>
<div class="t " style="left:1070.40px;top:211.60px;font-size:9.6px;color:#e0e0e0;transform:scaleX(0.920)">0</div>
<svg style="left:1090.10px;top:213.70px" width="9" height="9" viewBox="0 0 9 9"><path d="M0.5 4.5H8.5" stroke="#5a5a5a" stroke-width="1.3"/></svg>
<svg style="left:1100.80px;top:213.70px" width="9" height="9" viewBox="0 0 9 9"><path d="M0.5 4.5H8.5M4.5 0.5V8.5" stroke="#f0f0f0" stroke-width="1.3"/></svg>
<div class="box" style="left:1064.00px;top:231.70px;width:46.80px;height:21.00px;background:#292929"></div>
<div class="t " style="left:1070.40px;top:235.60px;font-size:9.6px;color:#e0e0e0;transform:scaleX(0.920)">33</div>
<svg style="left:1090.10px;top:237.70px" width="9" height="9" viewBox="0 0 9 9"><path d="M0.5 4.5H8.5" stroke="#f0f0f0" stroke-width="1.3"/></svg>
<svg style="left:1100.80px;top:237.70px" width="9" height="9" viewBox="0 0 9 9"><path d="M0.5 4.5H8.5M4.5 0.5V8.5" stroke="#f0f0f0" stroke-width="1.3"/></svg>
<div class="box" style="left:1064.00px;top:255.70px;width:46.80px;height:21.00px;background:#292929"></div>
<div class="t " style="left:1070.40px;top:259.60px;font-size:9.6px;color:#e0e0e0;transform:scaleX(0.920)">79</div>
<svg style="left:1090.10px;top:261.70px" width="9" height="9" viewBox="0 0 9 9"><path d="M0.5 4.5H8.5" stroke="#f0f0f0" stroke-width="1.3"/></svg>
<svg style="left:1100.80px;top:261.70px" width="9" height="9" viewBox="0 0 9 9"><path d="M0.5 4.5H8.5M4.5 0.5V8.5" stroke="#f0f0f0" stroke-width="1.3"/></svg>
<svg style="left:770.00px;top:629.80px" width="10" height="9" viewBox="0 0 10 9"><circle cx="5" cy="2.8" r="2.2" fill="none" stroke="#666" stroke-width="1"/><circle cx="2.8" cy="6.2" r="2.2" fill="none" stroke="#666" stroke-width="1"/><circle cx="7.2" cy="6.2" r="2.2" fill="none" stroke="#666" stroke-width="1"/></svg>
<svg style="left:784.10px;top:629.80px" width="9" height="9" viewBox="0 0 9 9"><circle cx="4.5" cy="4.5" r="3.6" fill="none" stroke="#4a4a4a" stroke-width="1"/><path d="M4.5 2.4V5M4.5 6V6.8" stroke="#4a4a4a" stroke-width="1"/></svg>
<svg style="left:802.50px;top:628.80px" width="11" height="11" viewBox="0 0 11 11"><path d="M2.4 9.6L3 7.4L6.6 3.8L8.2 5.4L4.6 9Z" fill="#d9e9f7"/><path d="M6.2 3.2L8.4 1.4a1.5 1.5 0 0 1 2 2L8.8 5.8Z" fill="#f2f2f2"/><path d="M1.4 3L3.8 5.2" stroke="#2f8fe0" stroke-width="1.3"/><path d="M1.2 9L3 10.4" stroke="#2f8fe0" stroke-width="1.3"/></svg>
<div class="t " style="left:1033.50px;top:627.70px;font-size:9.6px;color:#d8d8d8;transform:scaleX(0.821)">RGBA:</div>
<div class="box" style="left:1061.40px;top:624.80px;width:50.20px;height:18.40px;background:#282828"></div>
<div class="t " style="left:1065.60px;top:627.70px;font-size:9.6px;color:#e0e0e0;transform:scaleX(0.949)">545454c9</div>
<div class="abs" style="left:765.60px;top:646.60px;width:348.60px;height:1.00px;background:#242424;"></div>
<div class="t " style="left:982.60px;top:655.00px;font-size:9.6px;color:#d8d8d8;transform:scaleX(0.973)">Blend mode:</div>
<div class="box" style="left:1039.00px;top:652.80px;width:72.60px;height:17.80px;background:#282828"></div>
<div class="t " style="left:1043.40px;top:655.00px;font-size:9.6px;color:#e0e0e0;transform:scaleX(1.022)">Normal</div>
<svg style="left:1099.60px;top:659.30px" width="8" height="5" viewBox="0 0 8 5"><path d="M0 0H8L4 4.5Z" fill="#f0f0f0"/></svg>
<div class="box" style="left:768.50px;top:675.20px;width:343.00px;height:16.60px;background:#272727"></div>
<div class="t " style="left:770.70px;top:676.70px;font-size:9.6px;color:#e6e6e6;transform:scaleX(0.941)">Blur (%)</div>
<div class="t " style="left:1068.90px;top:676.70px;font-size:9.6px;color:#e0e0e0;transform:scaleX(0.920)">0.0</div>
<svg style="left:1091.30px;top:679.00px" width="9" height="9" viewBox="0 0 9 9"><path d="M0.5 4.5H8.5" stroke="#5a5a5a" stroke-width="1.3"/></svg>
<svg style="left:1103.10px;top:679.00px" width="9" height="9" viewBox="0 0 9 9"><path d="M0.5 4.5H8.5M4.5 0.5V8.5" stroke="#f0f0f0" stroke-width="1.3"/></svg>
<div class="box" style="left:768.50px;top:694.40px;width:343.00px;height:16.60px;background:#272727"></div>
<div class="abs" style="left:768.5px;top:694.4px;width:296px;height:15.6px;background:#1b57ae;border:0.8px solid #0e3e8a;border-radius:2px;box-sizing:border-box"></div>
<div class="t " style="left:770.70px;top:695.70px;font-size:9.6px;color:#f0f0f0;transform:scaleX(0.966)">Opacity (%)</div>
<div class="t " style="left:1070.70px;top:695.70px;font-size:9.6px;color:#e0e0e0;transform:scaleX(0.941)">100.0</div>
<svg style="left:1092.30px;top:698.00px" width="9" height="9" viewBox="0 0 9 9"><path d="M0.5 4.5H8.5" stroke="#f0f0f0" stroke-width="1.3"/></svg>
<svg style="left:1103.10px;top:698.00px" width="9" height="9" viewBox="0 0 9 9"><path d="M0.5 4.5H8.5M4.5 0.5V8.5" stroke="#5a5a5a" stroke-width="1.3"/></svg>
<div class="abs" style="left:1115.20px;top:68.00px;width:59.00px;height:650.00px;background:#353535;"></div>
<svg style="left:1127.10px;top:76.20px" width="13" height="13" viewBox="0 0 13 13"><path d="M2.8 1.6H7.4L10.2 4.4V11.4H2.8Z" fill="none" stroke="#f0f0f0" stroke-width="1.7" stroke-linejoin="round"/><path d="M7 2V5H10" fill="none" stroke="#f0f0f0" stroke-width="1.1"/><path d="M11.2 1.2L11.8 2.6" stroke="#a0c0a0" stroke-width="0.8"/></svg>
<svg style="left:1127.10px;top:97.70px" width="13" height="13" viewBox="0 0 13 13"><path d="M1.4 3V11H3L4.6 6.4H11.6V11H1.4" fill="#f0f0f0"/><path d="M1.4 11V2.2H5L6 3.6H10.4V5.2H3.8L1.4 11Z" fill="#f0f0f0"/><path d="M3.2 11L4.8 6.6H12.2L10.6 11Z" fill="#f0f0f0" stroke="#343434" stroke-width="0.7"/></svg>
<svg style="left:1127.10px;top:119.80px" width="13" height="13" viewBox="0 0 13 13"><path d="M6.5 1L9.4 5.4H7.6V7.4H5.4V5.4H3.6Z" fill="#1f9a30"/><path d="M2 7.6V11.4H11V7.6H9.4V9H3.6V7.6Z" fill="#f0f0f0"/><rect x="2" y="9" width="9" height="2.6" fill="#f0f0f0"/></svg>
<svg style="left:1127.10px;top:141.90px" width="13" height="13" viewBox="0 0 13 13"><rect x="3.8" y="1.8" width="5.4" height="2.6" fill="#f0f0f0"/><rect x="1.8" y="4.6" width="9.4" height="4.6" rx="0.8" fill="#f0f0f0"/><rect x="3.8" y="7.4" width="5.4" height="4" fill="#f0f0f0" stroke="#343434" stroke-width="0.8"/></svg>
<svg style="left:1127.10px;top:172.80px" width="13" height="13" viewBox="0 0 13 13"><path d="M3 1.8H7.6L10.4 4.6V11.4H3Z" fill="none" stroke="#f0f0f0" stroke-width="1.7" stroke-linejoin="round"/><path d="M1.2 5.2A3.4 3.4 0 0 1 6 3.4" fill="none" stroke="#1f9a30" stroke-width="1.1"/><path d="M5 7.6L7 5.8V9.4Z" fill="#f0f0f0"/></svg>
<svg style="left:1127.10px;top:194.90px" width="13" height="13" viewBox="0 0 13 13"><path d="M2.6 1.6H7L9.8 4.4V11.2H2.6Z" fill="none" stroke="#f0f0f0" stroke-width="1.7" stroke-linejoin="round"/><path d="M6.6 2V5H9.6" fill="none" stroke="#f0f0f0" stroke-width="1.1"/><path d="M8.8 7.2L12.4 9.2L8.8 11.4Z" fill="#1f9a30"/></svg>
<svg style="left:1127.10px;top:225.70px" width="13" height="13" viewBox="0 0 13 13"><path d="M3.4 4.6H8A2.8 2.8 0 0 1 8 10.2H6.6" fill="none" stroke="#f0f0f0" stroke-width="1.9"/><path d="M5 1.8L1.6 4.6L5 7.4Z" fill="#f0f0f0"/></svg>
<svg style="left:1127.10px;top:246.90px" width="13" height="13" viewBox="0 0 13 13"><path d="M9.6 4.6H5A2.8 2.8 0 0 0 5 10.2H6.4" fill="none" stroke="#6a6a6a" stroke-width="1.9"/><path d="M8 1.8L11.4 4.6L8 7.4Z" fill="#6a6a6a"/></svg>
<svg style="left:1127.10px;top:279.00px" width="13" height="13" viewBox="0 0 13 13"><rect x="1.6" y="1.6" width="6.6" height="6.6" fill="#f0f0f0"/><rect x="5" y="5" width="6.6" height="6.6" fill="#f0f0f0" stroke="#343434" stroke-width="0.9"/><rect x="7" y="7" width="2.6" height="2.6" fill="#b8b8b8"/></svg>
<svg style="left:1127.10px;top:300.90px" width="13" height="13" viewBox="0 0 13 13"><path d="M3 1.4L8.6 8.6M10 1.4L4.4 8.6" stroke="#f0f0f0" stroke-width="1.6"/><circle cx="3.6" cy="10" r="1.7" fill="none" stroke="#f0f0f0" stroke-width="1.4"/><circle cx="9.4" cy="10" r="1.7" fill="none" stroke="#f0f0f0" stroke-width="1.4"/></svg>
<svg style="left:1127.10px;top:323.30px" width="13" height="13" viewBox="0 0 13 13"><rect x="2" y="2.2" width="9" height="9.4" rx="0.8" fill="none" stroke="#f0f0f0" stroke-width="1.5"/><rect x="4.4" y="1" width="4.2" height="2.2" fill="#f0f0f0"/><rect x="4.4" y="5" width="4.2" height="4.4" fill="#dcdcdc"/></svg>
<svg style="left:1127.10px;top:353.90px" width="13" height="13" viewBox="0 0 13 13"><circle cx="5.8" cy="5.6" r="4.3" fill="#f0f0f0"/><path d="M8.8 8.8L11.8 11.8" stroke="#f0f0f0" stroke-width="2" stroke-linecap="round"/><circle cx="5.8" cy="5.6" r="2.6" fill="none" stroke="#343434" stroke-width="0.9"/><path d="M4.6 4.6L7 6.8" stroke="#343434" stroke-width="0.9"/></svg>
<svg style="left:1127.10px;top:376.30px" width="13" height="13" viewBox="0 0 13 13"><circle cx="5.8" cy="5.6" r="4.3" fill="#f0f0f0"/><path d="M8.8 8.8L11.8 11.8" stroke="#f0f0f0" stroke-width="2" stroke-linecap="round"/><path d="M3.4 5.6A2.4 2.4 0 0 1 8 4.6L5.8 5.8L8 7A2.4 2.4 0 0 1 3.4 5.6Z" fill="#343434"/></svg>
<svg style="left:1127.10px;top:398.20px" width="13" height="13" viewBox="0 0 13 13"><circle cx="5.8" cy="5.6" r="4.3" fill="#f0f0f0"/><path d="M8.8 8.8L11.8 11.8" stroke="#f0f0f0" stroke-width="2" stroke-linecap="round"/><rect x="4" y="3" width="3.6" height="5.2" fill="none" stroke="#343434" stroke-width="1"/></svg>
<svg style="left:1127.10px;top:420.00px" width="13" height="13" viewBox="0 0 13 13"><rect x="3" y="3" width="7" height="7" fill="none" stroke="#f0f0f0" stroke-width="1.3"/><path d="M1 1L3 3M12 1L10 3M1 12L3 10M12 12L10 10" stroke="#cfcfcf" stroke-width="1.1"/><rect x="5.4" y="5.4" width="2.2" height="2.2" fill="#f0f0f0"/></svg>
<svg style="left:1127.10px;top:450.10px" width="13" height="13" viewBox="0 0 13 13"><path d="M1.6 1.6H8V4.4H4.4V8H1.6Z" fill="#f0f0f0"/><rect x="5" y="5" width="6.8" height="6.8" fill="#12a024"/></svg>
<svg style="left:1127.10px;top:474.20px" width="13" height="13" viewBox="0 0 13 13"><path d="M1.6 1.6H8V4.4H4.4V8H1.6Z" fill="#f0f0f0"/><rect x="5" y="5" width="6.4" height="6.4" fill="none" stroke="#f0f0f0" stroke-width="1.5"/><rect x="7" y="7.4" width="2.4" height="2.2" fill="#f0f0f0"/><path d="M7.4 7.4V6.6a0.8 0.8 0 0 1 1.6 0V7.4" fill="none" stroke="#f0f0f0" stroke-width="0.7"/></svg>
<svg style="left:1127.10px;top:496.30px" width="13" height="13" viewBox="0 0 13 13"><path d="M1.6 1.6H8V4.4H4.4V8H1.6Z" fill="#f0f0f0"/><rect x="5" y="5" width="6.4" height="6.4" fill="none" stroke="#f0f0f0" stroke-width="1.5"/><path d="M7.2 6.4V10.2M7.2 8.2H9.8" stroke="#f0f0f0" stroke-width="0.9"/></svg>
<svg style="left:1127.10px;top:525.50px" width="13" height="13" viewBox="0 0 13 13"><ellipse cx="6.6" cy="6.4" rx="4" ry="2.8" transform="rotate(28 6.6 6.4)" fill="#f0f4f0"/><path d="M2 3.2L3.4 2M9.6 11L11.2 9.8M1.6 8.8L2.6 10.2M10 2.4L11.2 3.8" stroke="#1f9a30" stroke-width="1.1"/></svg>
<svg style="left:1127.10px;top:548.80px" width="13" height="13" viewBox="0 0 13 13"><circle cx="5.6" cy="5.6" r="2.6" fill="#f0f0f0"/><circle cx="9" cy="3" r="1.1" fill="#cfcfcf"/><circle cx="9.4" cy="8.6" r="1.2" fill="#cfcfcf"/><circle cx="3" cy="9.6" r="1" fill="#bdbdbd"/><circle cx="2.4" cy="2.6" r="0.9" fill="#bdbdbd"/><circle cx="6.4" cy="11" r="0.8" fill="#a8a8a8"/></svg>
<svg style="left:1127.10px;top:578.10px" width="13" height="13" viewBox="0 0 13 13"><path d="M1.6 2.6H9.4" stroke="#c8c8c8" stroke-width="1.1"/><path d="M2 2.6V9.4" stroke="#c8c8c8" stroke-width="1.1"/><path d="M3.6 10.6L4.6 7.6L10 2.2L11.6 3.8L6.2 9.2Z" fill="#343434" stroke="#f0f0f0" stroke-width="1"/><path d="M2 9L4 11.4" stroke="#2f9fe0" stroke-width="1.4"/></svg>
<svg style="left:1127.10px;top:601.90px" width="13" height="13" viewBox="0 0 13 13"><path d="M2.2 2.8H10.8M6.5 2.8V11.4" stroke="#f0f0f0" stroke-width="2" fill="none"/></svg>
<svg style="left:1127.10px;top:624.20px" width="13" height="13" viewBox="0 0 13 13"><path d="M2.4 3C5 1.9 8 1.9 10.6 3" stroke="#2a8fd8" stroke-width="1.8" fill="none" stroke-linecap="round"/><path d="M3 6.4H10.2" stroke="#2a8fd8" stroke-width="1.9" stroke-linecap="round"/><path d="M2.6 9.8C5 10.9 8 10.9 10.4 9.8" stroke="#eef6fd" stroke-width="1.9" fill="none" stroke-linecap="round"/></svg>
<svg style="left:1127.10px;top:645.70px" width="13" height="13" viewBox="0 0 13 13"><rect x="1.6" y="1.8" width="9.8" height="9.4" fill="none" stroke="#d8d8d8" stroke-width="1.3"/><path d="M5.4 4.6L3.6 6.5L5.4 8.4M7.6 4.6L9.4 6.5L7.6 8.4" fill="none" stroke="#9cc49c" stroke-width="1.1"/></svg>
<svg style="left:1127.10px;top:668.50px" width="13" height="13" viewBox="0 0 13 13"><rect x="1.8" y="1.8" width="9.4" height="9.4" fill="#b0242c" stroke="#e8d8d8" stroke-width="1.2"/><path d="M4.6 3V10M8.4 3V10" stroke="#f0d0d0" stroke-width="1.1"/><path d="M5.8 5L6.5 9L7.2 5Z" fill="#5a0a10"/></svg>
<svg style="left:1130.00px;top:700.30px" width="6" height="8" viewBox="0 0 6 8"><path d="M0.6 0L5.6 4L0.6 8Z" fill="#f0f0f0"/></svg>
<div class="blue" style="left:1150.00px;top:72.30px;width:23.60px;height:19.80px;background:#204c90"></div>
<svg style="left:1155.30px;top:76.10px" width="13" height="13" viewBox="0 0 13 13"><path d="M4.2 2.6A4.6 4.6 0 1 1 2 7" fill="none" stroke="#f0f0f0" stroke-width="1.9"/><path d="M3 4.8V7.8" stroke="#b8cdf0" stroke-width="1.2"/><circle cx="6.5" cy="6.6" r="0.9" fill="#b8cdf0"/></svg>
<div class="blue" style="left:1150.00px;top:103.10px;width:23.60px;height:19.80px;background:#204c90"></div>
<svg style="left:1155.30px;top:106.50px" width="13" height="13" viewBox="0 0 13 13"><path d="M2.4 11V2.4H11" fill="none" stroke="#3f86d8" stroke-width="1.1" stroke-dasharray="1.6 1.2"/><path d="M10.6 4V11M4 10.6H10.6" stroke="#2c63b0" stroke-width="0.9"/><circle cx="4.6" cy="5" r="0.6" fill="#5a9ae0"/><circle cx="4.6" cy="7.6" r="0.6" fill="#5a9ae0"/></svg>
<div class="blue" style="left:1150.00px;top:125.80px;width:23.60px;height:19.80px;background:#204c90"></div>
<svg style="left:1155.30px;top:129.20px" width="13" height="13" viewBox="0 0 13 13"><rect x="2.4" y="2.4" width="8.4" height="8.4" fill="none" stroke="#3f86d8" stroke-width="1" stroke-dasharray="1.6 1.2"/><path d="M2.4 6.6H10.8M6.6 2.4V10.8" stroke="#2f8f48" stroke-width="1"/><path d="M4.4 2.4V10.8M8.8 2.4V10.8" stroke="#2a6f78" stroke-width="0.8"/></svg>
<div class="blue" style="left:1150.00px;top:147.90px;width:23.60px;height:19.80px;background:#204c90"></div>
<svg style="left:1155.30px;top:151.30px" width="13" height="13" viewBox="0 0 13 13"><rect x="2.6" y="2.6" width="8" height="8" fill="none" stroke="#3f86d8" stroke-width="1.1" stroke-dasharray="2 1.4"/><path d="M6.6 1.8V3.4M6.6 9.8V11.4M1.8 6.6H3.4M9.8 6.6H11.4" stroke="#5a9ae0" stroke-width="0.9"/></svg>
<div class="blue" style="left:1150.00px;top:169.50px;width:23.60px;height:19.80px;background:#204c90"></div>
<svg style="left:1155.30px;top:173.10px" width="13" height="13" viewBox="0 0 13 13"><path d="M2.6 2.6H10.6V10.6H2.6Z" fill="none" stroke="#2f68b8" stroke-width="1" stroke-dasharray="1.8 1.4"/><path d="M6.6 2.4V10.8M2.4 6.6H10.8" stroke="#2a7fa0" stroke-width="0.9" stroke-dasharray="1.6 1.2"/><circle cx="4.4" cy="8.8" r="0.8" fill="#2f8f48"/><circle cx="8.8" cy="8.8" r="0.8" fill="#2f8f48"/></svg>
<svg style="left:1155.30px;top:195.30px" width="13" height="13" viewBox="0 0 13 13"><rect x="2.6" y="2.8" width="8.2" height="8" fill="#146c22" stroke="#8a7a30" stroke-width="1" stroke-dasharray="1.6 1"/><circle cx="6.7" cy="6.8" r="1.5" fill="#2aa83c"/></svg>
<div class="blue" style="left:1150.00px;top:223.10px;width:23.60px;height:19.00px;background:#204c90"></div>
<svg style="left:1155.30px;top:226.30px" width="13" height="13" viewBox="0 0 13 13"><path d="M2.6 11C2.6 6.4 4 4 6.6 4C9.2 4 10.6 6.4 10.6 11" fill="none" stroke="#3f9ad8" stroke-width="1.2"/><path d="M4.6 2.6L6.6 4.4L8.6 2.6" fill="none" stroke="#2f9f48" stroke-width="1.2"/><circle cx="6.6" cy="2.4" r="0.9" fill="#2f9f48"/></svg>
<div class="blue" style="left:1150.00px;top:244.80px;width:23.60px;height:20.00px;background:#204c90"></div>
<svg style="left:1155.30px;top:248.30px" width="13" height="13" viewBox="0 0 13 13"><circle cx="3" cy="6.5" r="1.1" fill="#dce8fb"/><circle cx="6.6" cy="6.5" r="1.4" fill="#f0f0f0"/><circle cx="10.2" cy="6.5" r="1.1" fill="#dce8fb"/></svg>
<svg style="left:1155.30px;top:270.70px" width="13" height="13" viewBox="0 0 13 13"><path d="M2 11.6L11.4 1.6" stroke="#4f9a58" stroke-width="1.2"/><path d="M3.4 4L10.6 9.2" stroke="#c8d4c8" stroke-width="1"/></svg>
<div class="blue" style="left:1150.00px;top:289.10px;width:23.60px;height:19.80px;background:#204c90"></div>
<svg style="left:1155.30px;top:292.50px" width="13" height="13" viewBox="0 0 13 13"><path d="M2.8 3C6.4 2.4 9.8 4.4 9.6 8.6" fill="none" stroke="#4aa0e0" stroke-width="1.3"/><path d="M5 10.8C7.6 11 9.6 10 9.8 8" fill="none" stroke="#2f9f48" stroke-width="1.3"/></svg>
<div class="blue" style="left:1150.00px;top:311.60px;width:23.60px;height:19.80px;background:#204c90"></div>
<svg style="left:1155.30px;top:315.50px" width="13" height="13" viewBox="0 0 13 13"><path d="M2.6 10.6C2.6 5.6 4.2 3.6 6.6 3.6C9 3.6 10.6 5.6 10.6 10.6" fill="none" stroke="#dce8fb" stroke-width="1.2"/></svg>
<div class="blue" style="left:1150.00px;top:333.90px;width:23.60px;height:19.00px;background:#204c90"></div>
<svg style="left:1155.30px;top:336.90px" width="13" height="13" viewBox="0 0 13 13"><path d="M3.8 2.4V10.8" stroke="#f0f0f0" stroke-width="1.2"/><circle cx="3.8" cy="4" r="1.4" fill="#f0f0f0"/><circle cx="3.8" cy="9" r="1.4" fill="#f0f0f0"/><path d="M3.8 6.6H9.6" stroke="#f0f0f0" stroke-width="1.6"/><path d="M10.4 2.4C8.8 5 8.8 8 10.4 10.8" fill="none" stroke="#8fc0f0" stroke-width="0.9"/></svg>
<svg style="left:1155.30px;top:359.50px" width="13" height="13" viewBox="0 0 13 13"><path d="M2 10.4H11.4" stroke="#cfcfcf" stroke-width="1.3"/><path d="M6.9 10V1.6" stroke="#e8e8e8" stroke-width="1.1"/><path d="M4.4 10.2C6 9.6 6.6 8 6.8 5" fill="none" stroke="#9a9a9a" stroke-width="0.8"/></svg>
<svg style="left:1155.30px;top:380.90px" width="13" height="13" viewBox="0 0 13 13"><path d="M2.4 3H10.8" stroke="#e8e8e8" stroke-width="1.3"/><path d="M3 10.8C3 6 4.6 4.4 6.6 4.4C8.6 4.4 10.2 6 10.2 10.8" fill="none" stroke="#e0e0e0" stroke-width="1.2"/></svg>
<div class="blue" style="left:1150.00px;top:407.60px;width:23.60px;height:20.20px;background:#204c90"></div>
<svg style="left:1155.30px;top:411.10px" width="13" height="13" viewBox="0 0 13 13"><circle cx="4" cy="3.6" r="1.5" fill="none" stroke="#dce8fb" stroke-width="1"/><circle cx="9" cy="4.2" r="1.2" fill="#c8dcf8"/><circle cx="5" cy="9.4" r="1.3" fill="#c8dcf8"/><path d="M4 5.2V7" stroke="#dce8fb" stroke-width="0.8"/></svg>
<svg style="left:1155.30px;top:432.50px" width="13" height="13" viewBox="0 0 13 13"><g fill="#f0f0f0" stroke="#22a034" stroke-width="1.3"><circle cx="3.6" cy="3.6" r="1.6"/><circle cx="9.6" cy="3.6" r="1.6"/><circle cx="3.6" cy="9.6" r="1.6"/><circle cx="9.6" cy="9.6" r="1.6"/></g></svg>
<svg style="left:1155.30px;top:455.30px" width="13" height="13" viewBox="0 0 13 13"><path d="M4 4.6L6.6 2L9.2 4.6" fill="none" stroke="#2a8a3a" stroke-width="1.3"/><path d="M6.6 5V11.6M3.6 8.2H9.6" stroke="#bdbdbd" stroke-width="1.1"/><path d="M4 11H9.2" stroke="#6a5a4a" stroke-width="0.9"/></svg>
<div class="blue" style="left:1150.00px;top:473.50px;width:23.60px;height:20.80px;background:#204c90"></div>
<div class="t b" style="left:1157.50px;top:476.80px;font-size:12px;color:#f4f4f4;">A</div>
<svg style="left:1155.30px;top:477.50px" width="13" height="13" viewBox="0 0 13 13"><path d="M2 11.4H5" stroke="#2f9f48" stroke-width="1"/></svg>
<div class="blue" style="left:1150.00px;top:496.20px;width:23.60px;height:19.60px;background:#204c90"></div>
<svg style="left:1155.30px;top:499.90px" width="13" height="13" viewBox="0 0 13 13"><path d="M2.8 10.4C3 6 6 3 10.6 2.6" fill="none" stroke="#dce8fb" stroke-width="1.2"/><circle cx="8.6" cy="9.4" r="2" fill="#1f9a30"/><path d="M2 9L3 11L4.6 9.6" fill="none" stroke="#dce8fb" stroke-width="0.9"/></svg>
<div class="blue" style="left:1150.00px;top:518.40px;width:23.60px;height:19.60px;background:#204c90"></div>
<svg style="left:1155.30px;top:522.10px" width="13" height="13" viewBox="0 0 13 13"><path d="M2.6 11C3 6 6 3 10.8 2.4" fill="none" stroke="#dce8fb" stroke-width="1.2"/><path d="M5.8 11C6 8 7.6 6 10.4 5.6" fill="none" stroke="#a8c8f0" stroke-width="1"/></svg>
<svg style="left:1155.30px;top:552.10px" width="13" height="13" viewBox="0 0 13 13"><path d="M3.4 2H11.2V4.6H3.4Z" fill="#f0f0f0"/><path d="M3.4 5.4H8V7.6H3.4Z" fill="#bdbdbd"/><path d="M3.4 8.6H7.4V11H3.4Z" fill="#f0f0f0"/><path d="M2.4 1.6V11.6" stroke="#8a8a8a" stroke-width="0.8"/></svg>
<svg style="left:1155.30px;top:575.50px" width="13" height="13" viewBox="0 0 13 13"><path d="M3.6 10.4V4.4C3.6 2.8 5 2.4 6.6 2.4C8.2 2.4 9.6 2.8 9.6 4.4V10.4" fill="none" stroke="#4a4a4a" stroke-width="1.1"/></svg>
<svg style="left:1155.30px;top:597.00px" width="13" height="13" viewBox="0 0 13 13"><path d="M3.4 2.6V10.6M6.6 2.6V10.6M9.8 2.6V10.6" stroke="#585858" stroke-width="1.3"/></svg>
<div class="blue" style="left:1150.00px;top:624.80px;width:23.60px;height:19.60px;background:#204c90"></div>
<svg style="left:1155.30px;top:628.30px" width="13" height="13" viewBox="0 0 13 13"><rect x="1.8" y="1.8" width="9.6" height="9.6" fill="#dfe9fb"/><path d="M4.2 1.8V11.4M6.6 1.8V11.4M9 1.8V11.4M1.8 4.2H11.4M1.8 6.6H11.4M1.8 9H11.4" stroke="#5a84c8" stroke-width="0.7"/></svg>
<div class="blue" style="left:1150.00px;top:647.00px;width:23.60px;height:19.60px;background:#204c90"></div>
<svg style="left:1155.30px;top:650.30px" width="13" height="13" viewBox="0 0 13 13"><path d="M5.4 1.6V11.6" stroke="#e8effc" stroke-width="1.2"/><path d="M4 8.6H11.6" stroke="#e8effc" stroke-width="1.8"/></svg>
<div class="blue" style="left:1150.00px;top:669.00px;width:23.60px;height:19.60px;background:#204c90"></div>
<svg style="left:1155.30px;top:672.30px" width="13" height="13" viewBox="0 0 13 13"><rect x="3" y="2.2" width="7.4" height="8.8" fill="none" stroke="#e8effc" stroke-width="1.3"/></svg>
<div class="abs" style="left:21.80px;top:705.00px;width:743.80px;height:13.00px;background:#333333;"></div>
<div class="abs" style="left:741.00px;top:68.80px;width:16.60px;height:649.00px;background:#313131;"></div>
<div class="abs" style="left:757.60px;top:68.80px;width:8.00px;height:649.00px;background:#353535;"></div>
<div class="abs" style="left:283.3px;top:708.8px;width:227.6px;height:4.4px;border-radius:2.2px;background:#a0a0a0"></div>
<div class="abs" style="left:746.6px;top:326px;width:5.2px;height:130.6px;border-radius:2.6px;background:#a6a6a6"></div>
<div class="abs" style="left:760.4px;top:389.2px;width:1.6px;height:1.6px;border-radius:50%;background:#d8d8d8"></div>
<div class="abs" style="left:760.4px;top:391.8px;width:1.6px;height:1.6px;border-radius:50%;background:#d8d8d8"></div>
<div class="abs" style="left:760.4px;top:394.40000000000003px;width:1.6px;height:1.6px;border-radius:50%;background:#d8d8d8"></div>
<svg style="left:744.10px;top:71.50px" width="11" height="9" viewBox="0 0 11 9"><rect x="0.8" y="0.8" width="9.4" height="6" rx="0.6" fill="none" stroke="#e0e0e0" stroke-width="1.1"/><path d="M3.4 8.4H7.6" stroke="#e0e0e0" stroke-width="1.1"/></svg>
<svg style="left:743.60px;top:707.10px" width="10" height="9" viewBox="0 0 10 9"><circle cx="5" cy="2.8" r="2.1" fill="none" stroke="#6a6a6a" stroke-width="1"/><circle cx="2.9" cy="6.2" r="2.1" fill="none" stroke="#6a6a6a" stroke-width="1"/><circle cx="7.1" cy="6.2" r="2.1" fill="none" stroke="#6a6a6a" stroke-width="1"/></svg>
<div class="abs" style="left:0.00px;top:717.80px;width:1174.00px;height:22.00px;background:#333333;"></div>
<div class="abs" style="left:0.00px;top:718.00px;width:21.40px;height:21.00px;background:#ffffff;"></div>
<svg style="left:0.20px;top:718.00px" width="21" height="21" viewBox="0 0 21 21"><path d="M1.5 1.5L19.5 19.5M19.5 1.5L1.5 19.5" stroke="#cc2030" stroke-width="1.15"/><circle cx="10.5" cy="10.5" r="6" fill="none" stroke="#e8d8d4" stroke-width="1"/></svg>
<div class="abs" style="left:21.40px;top:718.00px;width:21.40px;height:21.00px;background:#000000;"></div>
<div class="abs" style="left:42.80px;top:718.00px;width:21.80px;height:21.00px;background:#808080;"></div>
<div class="abs" style="left:64.60px;top:718.00px;width:21.40px;height:21.00px;background:#ffffff;"></div>
<div class="abs" style="left:86px;top:729px;width:1032.48px;height:10px;background:linear-gradient(90deg,#1a1a1a 0.00px 10.76px,#333333 10.76px 21.51px,#4d4d4d 21.51px 32.27px,#666666 32.27px 43.02px,#999999 43.02px 53.78px,#b3b3b3 53.78px 64.53px,#cccccc 64.53px 75.29px,#e6e6e6 75.29px 86.04px,#ececec 86.04px 96.80px,#f2f2f2 96.80px 107.55px,#f9f9f9 107.55px 118.31px,#800000 118.31px 129.06px,#ff0000 129.06px 139.81px,#808000 139.81px 150.57px,#ffff00 150.57px 161.33px,#008000 161.33px 172.08px,#00ff00 172.08px 182.84px,#008080 182.84px 193.59px,#00ffff 193.59px 204.35px,#000080 204.35px 215.10px,#0000ff 215.10px 225.86px,#800080 225.86px 236.61px,#ff00ff 236.61px 247.37px,#2b0000 247.37px 258.12px,#550000 258.12px 268.88px,#800000 268.88px 279.63px,#aa0000 279.63px 290.39px,#d40000 290.39px 301.14px,#ff0000 301.14px 311.90px,#ff2a2a 311.90px 322.65px,#ff5555 322.65px 333.41px,#ff8080 333.41px 344.16px,#ffaaaa 344.16px 354.92px,#ffd5d5 354.92px 365.67px,#280b0b 365.67px 376.43px,#501616 376.43px 387.18px,#782121 387.18px 397.94px,#a02c2c 397.94px 408.69px,#c83737 408.69px 419.45px,#d35f5f 419.45px 430.20px,#de8787 430.20px 440.96px,#e9afaf 440.96px 451.71px,#f4d7d7 451.71px 462.47px,#241c1c 462.47px 473.22px,#483737 473.22px 483.98px,#6c5353 483.98px 494.73px,#916f6f 494.73px 505.49px,#ac9393 505.49px 516.24px,#c8b7b7 516.24px 527.00px,#e3dbdb 527.00px 537.75px,#2b1100 537.75px 548.50px,#552200 548.50px 559.26px,#803300 559.26px 570.01px,#aa4400 570.01px 580.77px,#d45500 580.77px 591.53px,#ff6600 591.53px 602.28px,#ff7f2a 602.28px 613.04px,#ff9955 613.04px 623.79px,#ffb380 623.79px 634.55px,#ffccaa 634.55px 645.30px,#ffe6d5 645.30px 656.06px,#28170b 656.06px 666.81px,#502d16 666.81px 677.57px,#784421 677.57px 688.32px,#a05a2c 688.32px 699.08px,#c87137 699.08px 709.83px,#d38d5f 709.83px 720.59px,#deaa87 720.59px 731.34px,#e9c6af 731.34px 742.10px,#f4e3d7 742.10px 752.85px,#241f1c 752.85px 763.61px,#483e37 763.61px 774.36px,#6c5d53 774.36px 785.12px,#917c6f 785.12px 795.87px,#ac9d93 795.87px 806.63px,#c8beb7 806.63px 817.38px,#e3dedb 817.38px 828.14px,#2b2200 828.14px 838.89px,#554400 838.89px 849.65px,#806600 849.65px 860.40px,#aa8800 860.40px 871.16px,#d4aa00 871.16px 881.91px,#ffcc00 881.91px 892.67px,#ffd42a 892.67px 903.42px,#ffdd55 903.42px 914.18px,#ffe680 914.18px 924.93px,#ffeeaa 924.93px 935.69px,#fff6d5 935.69px 946.44px,#28220b 946.44px 957.20px,#504416 957.20px 967.95px,#786721 967.95px 978.71px,#a0892c 978.71px 989.46px,#c8ab37 989.46px 1000.22px,#d3bc5f 1000.22px 1010.97px,#decd87 1010.97px 1021.73px,#e9ddaf 1021.73px 1032.48px)"></div>
<svg style="left:1129.10px;top:725.20px" width="9" height="6" viewBox="0 0 9 6"><path d="M0.8 5L4.5 1.2L8.2 5" stroke="#f0f0f0" stroke-width="1.4" fill="none"/></svg>
<svg style="left:1148.50px;top:724.40px" width="9" height="6" viewBox="0 0 9 6"><path d="M0.8 1L4.5 4.8L8.2 1" stroke="#f0f0f0" stroke-width="1.4" fill="none"/></svg>
<svg style="left:1165.10px;top:725.40px" width="9" height="8" viewBox="0 0 9 8"><path d="M0 1H9M0 4H9M0 7H9" stroke="#f0f0f0" stroke-width="1.2"/></svg>
<div class="abs" style="left:0.00px;top:739.60px;width:1174.00px;height:26.00px;background:#333333;"></div>
<div class="t " style="left:15.00px;top:740.80px;font-size:9.6px;color:#e0e0e0;transform:scaleX(0.938)">Fill:</div>
<div class="abs" style="left:38.80px;top:740.60px;width:15.40px;height:11.80px;background:#6c6c6c;"></div>
<div class="abs" style="left:54.20px;top:740.60px;width:15.80px;height:11.80px;background:#626262;"></div>
<div class="t " style="left:1.00px;top:754.40px;font-size:9.6px;color:#e0e0e0;transform:scaleX(0.888)">Stroke:</div>
<div class="t i" style="left:44.90px;top:754.40px;font-size:9.6px;color:#e0e0e0;transform:scaleX(0.872)">None</div>
<div class="t " style="left:72.00px;top:754.40px;font-size:9.6px;color:#e0e0e0;transform:scaleX(0.984)">Hairline</div>
<div class="t " style="left:106.00px;top:747.20px;font-size:9.6px;color:#e0e0e0;transform:scaleX(0.888)">O:</div>
<div class="t " style="left:122.30px;top:747.20px;font-size:9.6px;color:#e8e8e8;transform:scaleX(0.874)">100</div>
<svg style="left:140.90px;top:749.50px" width="9" height="9" viewBox="0 0 9 9"><path d="M0.5 4.5H8.5" stroke="#f0f0f0" stroke-width="1.3"/></svg>
<svg style="left:152.10px;top:749.50px" width="9" height="9" viewBox="0 0 9 9"><path d="M0.5 4.5H8.5M4.5 0.5V8.5" stroke="#4e4e4e" stroke-width="1.3"/></svg>
<div class="abs" style="left:170.60px;top:746.40px;width:1.80px;height:13.60px;background:#2c62b8;"></div>
<div class="t " style="left:176.30px;top:747.20px;font-size:9.6px;color:#e8e8e8;transform:scaleX(0.906)">Layer 1</div>
<svg style="left:218.00px;top:749.80px" width="10" height="8" viewBox="0 0 10 8"><path d="M0.8 2.4C2.6 5.4 7.4 5.4 9.2 2.4" fill="none" stroke="#e8e8e8" stroke-width="1.2"/><circle cx="5" cy="3.6" r="1.7" fill="none" stroke="#e8e8e8" stroke-width="1.2"/><path d="M1.6 5L0.8 6.6M5 6V7.6M8.4 5L9.2 6.6" stroke="#e8e8e8" stroke-width="0.9"/></svg>
<svg style="left:241.50px;top:747.90px" width="11" height="11" viewBox="0 0 11 11"><rect x="1" y="5" width="7" height="5.6" rx="0.8" fill="#f0f0f0"/><path d="M5.8 5V3.4a2 2 0 0 1 4 0V4.4" fill="none" stroke="#f0f0f0" stroke-width="1.3"/></svg>
<div class="t " style="left:263.00px;top:747.20px;font-size:9.6px;color:#e0e0e0;transform:scaleX(0.979)"><b>Path</b> 9 nodes in layer <b>Layer 1</b>. Click selection again to toggle scale/rotation handles.</div>
<div class="t " style="left:965.20px;top:740.10px;font-size:9.6px;color:#e0e0e0;transform:scaleX(0.727)">X:</div>
<div class="t " style="left:980.50px;top:740.10px;font-size:9.6px;color:#e0e0e0;transform:scaleX(0.903)">225.14</div>
<div class="t " style="left:965.20px;top:754.10px;font-size:9.6px;color:#e0e0e0;transform:scaleX(0.772)">Y:</div>
<div class="t " style="left:980.50px;top:754.10px;font-size:9.6px;color:#e0e0e0;transform:scaleX(0.903)">232.21</div>
<div class="t " style="left:1013.70px;top:747.40px;font-size:9.6px;color:#e0e0e0;transform:scaleX(0.821)">Z:</div>
<div class="box" style="left:1022.00px;top:744.40px;width:62.00px;height:19.60px;background:#303030"></div>
<div class="t " style="left:1026.80px;top:747.40px;font-size:9.6px;color:#e0e0e0;transform:scaleX(0.937)">138%</div>
<svg style="left:1059.00px;top:749.70px" width="9" height="9" viewBox="0 0 9 9"><path d="M0.5 4.5H8.5" stroke="#f0f0f0" stroke-width="1.3"/></svg>
<svg style="left:1072.00px;top:749.70px" width="9" height="9" viewBox="0 0 9 9"><path d="M0.5 4.5H8.5M4.5 0.5V8.5" stroke="#f0f0f0" stroke-width="1.3"/></svg>
<div class="t " style="left:1091.00px;top:747.40px;font-size:9.6px;color:#e0e0e0;transform:scaleX(0.792)">R:</div>
<div class="box" style="left:1104.00px;top:744.40px;width:62.00px;height:19.60px;background:#303030"></div>
<div class="t " style="left:1109.00px;top:747.40px;font-size:9.6px;color:#e0e0e0;transform:scaleX(0.968)">0.00°</div>
<svg style="left:1141.30px;top:749.70px" width="9" height="9" viewBox="0 0 9 9"><path d="M0.5 4.5H8.5" stroke="#f0f0f0" stroke-width="1.3"/></svg>
<svg style="left:1154.30px;top:749.70px" width="9" height="9" viewBox="0 0 9 9"><path d="M0.5 4.5H8.5M4.5 0.5V8.5" stroke="#f0f0f0" stroke-width="1.3"/></svg>
<svg style="left:840.4px;top:334.5px" width="11" height="15" viewBox="0 0 11 15"><path d="M0.7 0.7V11.6L3.4 9.2L5.6 13.6L7.6 12.6L5.5 8.4H9.3Z" fill="#fff" stroke="#111" stroke-width="0.9" stroke-linejoin="round"/></svg>
</div></body></html>
